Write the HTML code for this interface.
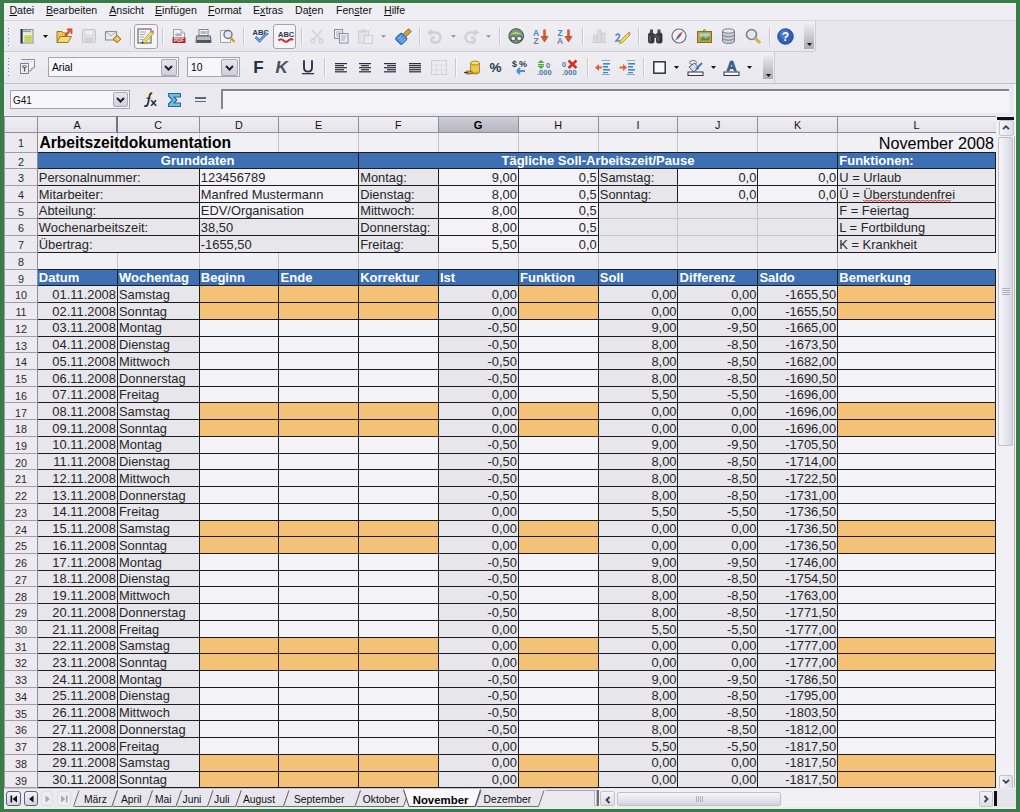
<!DOCTYPE html><html><head><meta charset="utf-8"><style>
*{box-sizing:border-box}
html,body{margin:0;padding:0}
body{width:1020px;height:812px;overflow:hidden;position:relative;background:#3a7b4a;font-family:"Liberation Sans",sans-serif;color:#000}
div{position:absolute}
.t{white-space:nowrap;line-height:1}
.c{font-size:12.9px;color:#262626;white-space:nowrap;line-height:1}
.r{text-align:right}
.h{font-weight:bold;color:#fff;font-size:13px;white-space:nowrap;line-height:1}
svg{position:absolute;overflow:visible}
</style></head><body>
<div style="left:4.00px;top:3.00px;width:1012.00px;height:806.00px;background:#e8e7ee"></div>
<div style="left:4.00px;top:3.00px;width:1012.00px;height:17.00px;background:#efeef3"></div>
<div style="left:4.00px;top:3.00px;width:1012.00px;height:1.00px;background:#eaf6ec"></div>
<div style="left:4.00px;top:20.00px;width:1012.00px;height:1.00px;background:#d6d5dc"></div>
<div class="t" style="left:9.40px;top:5.20px;font-size:10.6px;color:#111;text-decoration-thickness:1px;text-underline-offset:1px"><u>D</u>atei</div>
<div class="t" style="left:46.00px;top:5.20px;font-size:10.6px;color:#111;text-decoration-thickness:1px;text-underline-offset:1px"><u>B</u>earbeiten</div>
<div class="t" style="left:109.20px;top:5.20px;font-size:10.6px;color:#111;text-decoration-thickness:1px;text-underline-offset:1px"><u>A</u>nsicht</div>
<div class="t" style="left:155.00px;top:5.20px;font-size:10.6px;color:#111;text-decoration-thickness:1px;text-underline-offset:1px"><u>E</u>infügen</div>
<div class="t" style="left:208.00px;top:5.20px;font-size:10.6px;color:#111;text-decoration-thickness:1px;text-underline-offset:1px"><u>F</u>ormat</div>
<div class="t" style="left:253.00px;top:5.20px;font-size:10.6px;color:#111;text-decoration-thickness:1px;text-underline-offset:1px">E<u>x</u>tras</div>
<div class="t" style="left:295.00px;top:5.20px;font-size:10.6px;color:#111;text-decoration-thickness:1px;text-underline-offset:1px">Da<u>t</u>en</div>
<div class="t" style="left:336.00px;top:5.20px;font-size:10.6px;color:#111;text-decoration-thickness:1px;text-underline-offset:1px">Fen<u>s</u>ter</div>
<div class="t" style="left:384.00px;top:5.20px;font-size:10.6px;color:#111;text-decoration-thickness:1px;text-underline-offset:1px"><u>H</u>ilfe</div>
<div style="left:4.00px;top:21.00px;width:811.00px;height:30.00px;background:linear-gradient(#efeef3,#e9e8ee)"></div>
<div style="left:4.00px;top:51.00px;width:811.00px;height:1.00px;background:#cfced6"></div>
<div style="left:4.00px;top:52.00px;width:770.00px;height:31.00px;background:linear-gradient(#efeef3,#e9e8ee)"></div>
<div style="left:4.00px;top:82.50px;width:1012.00px;height:1.00px;background:#c4c3cb"></div>
<div style="left:4.00px;top:83.50px;width:1012.00px;height:32.50px;background:#eae9f0"></div>
<div style="left:815.00px;top:21.00px;width:1.00px;height:30.00px;background:#cfcdd4"></div>
<div style="left:774.00px;top:52.00px;width:1.00px;height:31.00px;background:#cfcdd4"></div>
<div style="left:8.20px;top:27.50px;width:1.20px;height:1.20px;background:#8a8a94"></div>
<div style="left:8.20px;top:30.90px;width:1.20px;height:1.20px;background:#8a8a94"></div>
<div style="left:8.20px;top:34.30px;width:1.20px;height:1.20px;background:#8a8a94"></div>
<div style="left:8.20px;top:37.70px;width:1.20px;height:1.20px;background:#8a8a94"></div>
<div style="left:8.20px;top:41.10px;width:1.20px;height:1.20px;background:#8a8a94"></div>
<div style="left:8.20px;top:44.50px;width:1.20px;height:1.20px;background:#8a8a94"></div>
<div style="left:8.20px;top:57.50px;width:1.20px;height:1.20px;background:#8a8a94"></div>
<div style="left:8.20px;top:60.90px;width:1.20px;height:1.20px;background:#8a8a94"></div>
<div style="left:8.20px;top:64.30px;width:1.20px;height:1.20px;background:#8a8a94"></div>
<div style="left:8.20px;top:67.70px;width:1.20px;height:1.20px;background:#8a8a94"></div>
<div style="left:8.20px;top:71.10px;width:1.20px;height:1.20px;background:#8a8a94"></div>
<div style="left:8.20px;top:74.50px;width:1.20px;height:1.20px;background:#8a8a94"></div>
<svg style="left:19px;top:28px" width="16" height="16" viewBox="0 0 16 16"><rect x="3" y="1.5" width="11" height="13.5" fill="#e8eed0" stroke="#8a8f88"/><rect x="5" y="7" width="8" height="7" fill="#d8e27a"/><path d="M5 9.5H13M5 12H13M8 7V14M10.5 7V14" stroke="#b5bf5a" stroke-width=".7"/><path d="M4 3 L12 3.5" stroke="#7aa0c0" stroke-width="1.3"/><rect x="1.5" y="1" width="2" height="14.5" fill="#1f2d55"/></svg>
<svg style="left:42.5px;top:34.5px" width="5" height="3" viewBox="0 0 5 3"><path d="M0 0H5L2.5 3Z" fill="#111"/></svg>
<svg style="left:56px;top:28px" width="17" height="16" viewBox="0 0 17 16"><path d="M1 3.5H6L7.5 5H11V14.5H1Z" fill="#f0c850" stroke="#9a7a20"/><path d="M1 14.5L4 8.5H15.5L12 14.5Z" fill="#f8dc70" stroke="#9a7a20"/><path d="M9 8 L14 2.5" stroke="#d05030" stroke-width="2.2"/><path d="M11 1.5H15.5V6" fill="none" stroke="#d05030" stroke-width="1.8"/></svg>
<svg style="left:81px;top:28px" width="16" height="16" viewBox="0 0 16 16"><rect x="1.5" y="1.5" width="13" height="13" rx="1" fill="#e2e2e6" stroke="#c4c4c8"/><rect x="4" y="2" width="8" height="5" fill="#f0f0f2" stroke="#cfcfd3" stroke-width=".7"/><rect x="4" y="9.5" width="8" height="5" fill="#d2d2d6"/></svg>
<svg style="left:104px;top:28px" width="18" height="17" viewBox="0 0 18 17"><rect x="1.5" y="3.5" width="11" height="8.5" fill="#e8eaf0" stroke="#8c9098" stroke-width="1.1"/><path d="M1.5 3.5L7 8L12.5 3.5" fill="none" stroke="#a8acb4" stroke-width="1"/><path d="M13 7L17 11L13 15L9 11Z" fill="#d8b040" stroke="#8a6a18" stroke-width=".8"/><path d="M11 11H14.5M13 9.5L14.8 11L13 12.5" fill="none" stroke="#f8e8a0" stroke-width=".9"/></svg>
<div style="left:129.50px;top:28.00px;width:1.00px;height:17.00px;background:#c9c7cf"></div>
<div style="left:130.50px;top:28.00px;width:1.00px;height:17.00px;background:#f8f8fa"></div>
<div style="left:134.30px;top:24.40px;width:23.70px;height:24.20px;border:1.5px solid #a4a3ac;border-radius:3px;background:#f5f5f8"></div>
<svg style="left:137px;top:28px" width="18" height="16" viewBox="0 0 18 16"><rect x="1" y="1" width="13" height="14" fill="#f4f4f8" stroke="#74747c" stroke-width="1.3"/><path d="M3 4H9M3 6.5H8M3 9H7M3 11.5H6" stroke="#9aa2b0" stroke-width=".9"/><path d="M5.5 13L14 3.5L16.5 5.5L8 15L5 15.5Z" fill="#e8e060" stroke="#8a8030" stroke-width=".6"/><path d="M14 3.5L16.5 5.5L17.2 3.6L15.6 2.2Z" fill="#c08090"/><circle cx="5.6" cy="14.6" r=".9" fill="#202028"/></svg>
<div style="left:162.00px;top:28.00px;width:1.00px;height:17.00px;background:#c9c7cf"></div>
<div style="left:163.00px;top:28.00px;width:1.00px;height:17.00px;background:#f8f8fa"></div>
<svg style="left:171px;top:28px" width="16" height="16" viewBox="0 0 16 16"><path d="M2.5 1.5H10L13.5 5V14.5H2.5Z" fill="#f2f2f4" stroke="#9a9ea6"/><path d="M10 1.5V5H13.5" fill="#dde" stroke="#9a9ea6" stroke-width=".8"/><rect x="4.5" y="5.5" width="6" height="2.5" fill="#8890a0" opacity=".7"/><rect x="1.5" y="9.5" width="13" height="5.5" fill="#a82830"/><text x="8" y="14.2" text-anchor="middle" font-size="5" font-weight="bold" font-family="Liberation Sans" fill="#f8e0e0">PDF</text></svg>
<svg style="left:195px;top:28px" width="17" height="16" viewBox="0 0 17 16"><rect x="4" y="1.5" width="9" height="6" fill="#f6f6f8" stroke="#80848c"/><rect x="5.5" y="3" width="6" height="3" fill="#a8b8d0"/><path d="M1.5 8H15.5L16 14.5H1Z" fill="#b8bcc2" stroke="#60646c"/><rect x="1.5" y="12" width="14.5" height="2.5" fill="#50545c"/></svg>
<svg style="left:219px;top:28px" width="17" height="16" viewBox="0 0 17 16"><path d="M1.5 2.5H9L11.5 5V14.5H1.5Z" fill="#f6f6f8" stroke="#a0a4aa"/><circle cx="9" cy="6.5" r="4" fill="#dde8f4" stroke="#70767e" stroke-width="1.4"/><path d="M11.5 9.5L15.5 14" stroke="#c8a030" stroke-width="2.4"/></svg>
<div style="left:243.30px;top:28.00px;width:1.00px;height:17.00px;background:#c9c7cf"></div>
<div style="left:244.30px;top:28.00px;width:1.00px;height:17.00px;background:#f8f8fa"></div>
<svg style="left:251.5px;top:27px" width="17" height="17" viewBox="0 0 17 17"><text x="0.5" y="7.5" font-size="7.5" font-weight="bold" font-family="Liberation Sans" fill="#2a3550">ABC</text><path d="M3.5 10L7.5 14L15 6" fill="none" stroke="#3a78b8" stroke-width="2.6"/><path d="M3.5 10L7.5 14L15 6" fill="none" stroke="#8cc4e8" stroke-width="1"/></svg>
<div style="left:273.40px;top:24.20px;width:22.60px;height:24.80px;border:1.5px solid #a4a3ac;border-radius:3px;background:#f5f5f8"></div>
<svg style="left:276.5px;top:28px" width="17" height="17" viewBox="0 0 17 17"><text x="1" y="9" font-size="7.5" font-weight="bold" font-family="Liberation Sans" fill="#2a3550">ABC</text><path d="M1.5 12.5Q4 10 6.5 12.5T11.5 12.5T16 12" fill="none" stroke="#c83030" stroke-width="2"/></svg>
<div style="left:300.50px;top:28.00px;width:1.00px;height:17.00px;background:#c9c7cf"></div>
<div style="left:301.50px;top:28.00px;width:1.00px;height:17.00px;background:#f8f8fa"></div>
<svg style="left:308.5px;top:28px" width="16" height="16" viewBox="0 0 16 16"><path d="M3 2L12 12M13 2L4 12" stroke="#d4d4d8" stroke-width="1.8"/><circle cx="4" cy="13" r="2" fill="none" stroke="#d4d4d8" stroke-width="1.3"/><circle cx="12" cy="13" r="2" fill="none" stroke="#d4d4d8" stroke-width="1.3"/></svg>
<svg style="left:333px;top:28px" width="17" height="16" viewBox="0 0 17 16"><rect x="1.5" y="1.5" width="8" height="9" fill="#eef0f4" stroke="#8890a0"/><path d="M3 4H8M3 6H8M3 8H7" stroke="#8890a0" stroke-width=".7"/><rect x="6.5" y="5.5" width="8.5" height="9.5" fill="#eef0f4" stroke="#8890a0"/><path d="M8 8H13M8 10H13M8 12H12" stroke="#8890a0" stroke-width=".7"/></svg>
<svg style="left:356.5px;top:28px" width="17" height="16" viewBox="0 0 17 16"><rect x="1.5" y="3" width="10" height="12" fill="#e4e4e8" stroke="#cdcdd2"/><rect x="4" y="1.5" width="5" height="3" fill="#d4d4d8"/><rect x="7.5" y="7.5" width="8" height="8" fill="#ececf0" stroke="#cdcdd2"/></svg>
<svg style="left:381px;top:34.5px" width="5" height="3" viewBox="0 0 5 3"><path d="M0 0H5L2.5 3Z" fill="#9c9ca4"/></svg>
<svg style="left:394.5px;top:27.5px" width="18" height="17" viewBox="0 0 18 17"><g transform="rotate(45 8 9)"><rect x="3.5" y="7" width="9" height="9" rx="2" fill="#4a8ed8" stroke="#23508a" stroke-width=".9"/><path d="M6 9V14M8.5 9V14M11 9V14" stroke="#b8dcf8" stroke-width=".8"/><rect x="6" y="-1" width="4" height="8" rx="1" fill="#c8a040" stroke="#7a5a18" stroke-width=".7"/></g></svg>
<div style="left:419.00px;top:28.00px;width:1.00px;height:17.00px;background:#c9c7cf"></div>
<div style="left:420.00px;top:28.00px;width:1.00px;height:17.00px;background:#f8f8fa"></div>
<svg style="left:425.5px;top:28.5px" width="18" height="16" viewBox="0 0 18 16"><path d="M4 3.5H9.5A5 5 0 0 1 9.5 13.5H8A2.5 2.5 0 0 1 8 8.5H9" fill="none" stroke="#cfcfd5" stroke-width="2.4"/><path d="M1 3.5L5.5 0V7Z" fill="#cfcfd5"/></svg>
<svg style="left:450.5px;top:34.5px" width="5" height="3" viewBox="0 0 5 3"><path d="M0 0H5L2.5 3Z" fill="#9c9ca4"/></svg>
<svg style="left:462.5px;top:28.5px" width="18" height="16" viewBox="0 0 18 16"><path d="M13 3.5H7.5A5 5 0 0 0 7.5 13.5H9A2.5 2.5 0 0 0 9 8.5H8" fill="none" stroke="#cfcfd5" stroke-width="2.4"/><path d="M16 3.5L11.5 0V7Z" fill="#cfcfd5"/></svg>
<svg style="left:486px;top:34.5px" width="5" height="3" viewBox="0 0 5 3"><path d="M0 0H5L2.5 3Z" fill="#9c9ca4"/></svg>
<div style="left:499.00px;top:28.00px;width:1.00px;height:17.00px;background:#c9c7cf"></div>
<div style="left:500.00px;top:28.00px;width:1.00px;height:17.00px;background:#f8f8fa"></div>
<svg style="left:507.5px;top:28px" width="17" height="16" viewBox="0 0 17 16"><circle cx="8.2" cy="8" r="7.3" fill="#7a9a78" stroke="#3e5246"/><path d="M2.5 6.5Q8 1.5 14 6.5Q8 5 2.5 6.5Z" fill="#b8e070"/><circle cx="5.2" cy="10.5" r="2.4" fill="#e6ece8" stroke="#3e4048" stroke-width=".9"/><circle cx="11.2" cy="10.5" r="2.4" fill="#e6ece8" stroke="#3e4048" stroke-width=".9"/></svg>
<svg style="left:532.5px;top:28px" width="17" height="16" viewBox="0 0 17 16"><text x="0" y="7.5" font-size="8.5" font-weight="bold" font-family="Liberation Sans" fill="#3a88c8">A</text><text x="0.5" y="15.5" font-size="8.5" font-weight="bold" font-family="Liberation Sans" fill="#787e88">Z</text><path d="M11.5 1.5V10" stroke="#d85a30" stroke-width="2.6"/><path d="M8 8.5H15L11.5 14Z" fill="#d85a30" stroke="#a83818" stroke-width=".6"/></svg>
<svg style="left:557px;top:28px" width="17" height="16" viewBox="0 0 17 16"><text x="0.5" y="7.5" font-size="8.5" font-weight="bold" font-family="Liberation Sans" fill="#3a88c8">Z</text><text x="0" y="15.5" font-size="8.5" font-weight="bold" font-family="Liberation Sans" fill="#787e88">A</text><path d="M11.5 1.5V10" stroke="#d85a30" stroke-width="2.6"/><path d="M8 8.5H15L11.5 14Z" fill="#d85a30" stroke="#a83818" stroke-width=".6"/></svg>
<div style="left:581.50px;top:28.00px;width:1.00px;height:17.00px;background:#c9c7cf"></div>
<div style="left:582.50px;top:28.00px;width:1.00px;height:17.00px;background:#f8f8fa"></div>
<svg style="left:591.5px;top:28px" width="15" height="16" viewBox="0 0 15 16"><rect x="1.5" y="7" width="3.5" height="7.5" fill="#dcdce0" stroke="#cacace" stroke-width=".7"/><rect x="5.5" y="2" width="3.5" height="12.5" fill="#dcdce0" stroke="#cacace" stroke-width=".7"/><rect x="9.5" y="5" width="3.5" height="9.5" fill="#dcdce0" stroke="#cacace" stroke-width=".7"/><path d="M0.5 14.5H14" stroke="#cacace"/></svg>
<svg style="left:613.5px;top:28px" width="17" height="16" viewBox="0 0 17 16"><path d="M1.5 7.5Q4 5 5.5 7Q6 9 2 13H7" fill="none" stroke="#5a88c8" stroke-width="1.6"/><path d="M6 13L14 5L16 7L8 15L5.5 15.5Z" fill="#f0d850" stroke="#a08020" stroke-width=".7"/><path d="M14 5L16 7L16.5 5L15 3.5Z" fill="#e07878"/></svg>
<div style="left:638.30px;top:28.00px;width:1.00px;height:17.00px;background:#c9c7cf"></div>
<div style="left:639.30px;top:28.00px;width:1.00px;height:17.00px;background:#f8f8fa"></div>
<svg style="left:646.5px;top:28px" width="17" height="16" viewBox="0 0 17 16"><rect x="1.5" y="5" width="5.5" height="10" rx="1.5" fill="#3a3a40" stroke="#1a1a1e" stroke-width=".7"/><rect x="9.5" y="5" width="5.5" height="10" rx="1.5" fill="#3a3a40" stroke="#1a1a1e" stroke-width=".7"/><rect x="3" y="1.5" width="3" height="4" fill="#4a4a50"/><rect x="10.5" y="1.5" width="3" height="4" fill="#4a4a50"/><rect x="6.5" y="6" width="3.5" height="4" fill="#505058"/><path d="M3 8V13M11 8V13" stroke="#8a8a94" stroke-width=".8"/></svg>
<svg style="left:670.5px;top:28px" width="16" height="16" viewBox="0 0 16 16"><circle cx="8" cy="8" r="7" fill="#f0f2f6" stroke="#6a6e78" stroke-width="1.2"/><path d="M12 3L9 9L7 7Z" fill="#d03030"/><path d="M4 13L7 7L9 9Z" fill="#3a6ab8"/></svg>
<svg style="left:695.5px;top:28px" width="17" height="16" viewBox="0 0 17 16"><rect x="1.5" y="3.5" width="14" height="11" fill="#c8a040" stroke="#8a6a20"/><rect x="3.5" y="5.5" width="10" height="7" fill="#98c070"/><path d="M3.5 12.5L7 8.5L10 11L13.5 8V12.5Z" fill="#5a8a40"/><rect x="3.5" y="5.5" width="10" height="2.5" fill="#a8d0e8"/><path d="M7 3.5L8.5 1L10 3.5" fill="none" stroke="#8a6a20" stroke-width=".8"/></svg>
<svg style="left:720.5px;top:28px" width="15" height="16" viewBox="0 0 15 16"><path d="M1.5 3V13A6 2.5 0 0 0 13.5 13V3" fill="#c8ccd4" stroke="#7a7e88"/><ellipse cx="7.5" cy="3" rx="6" ry="2.2" fill="#e8eaf0" stroke="#7a7e88"/><path d="M1.5 6.5A6 2.2 0 0 0 13.5 6.5M1.5 10A6 2.2 0 0 0 13.5 10" fill="none" stroke="#7a7e88"/></svg>
<svg style="left:744.5px;top:28px" width="17" height="16" viewBox="0 0 17 16"><circle cx="6.5" cy="6.5" r="5" fill="#dde8f4" stroke="#7a8088" stroke-width="1.6"/><path d="M10 10L15 15" stroke="#c8a030" stroke-width="2.8"/><path d="M10 10L15 15" stroke="#e8d070" stroke-width="1"/></svg>
<div style="left:769.00px;top:28.00px;width:1.00px;height:17.00px;background:#c9c7cf"></div>
<div style="left:770.00px;top:28.00px;width:1.00px;height:17.00px;background:#f8f8fa"></div>
<svg style="left:777px;top:27.5px" width="17" height="17" viewBox="0 0 17 17"><circle cx="8.5" cy="8.5" r="7.8" fill="#2e5fb0" stroke="#1c3e80" stroke-width=".8"/><circle cx="7.5" cy="6.5" r="5" fill="#5a88d0" opacity=".6"/><text x="8.5" y="13.2" text-anchor="middle" font-size="12" font-weight="bold" font-family="Liberation Sans" fill="#fff">?</text></svg>
<div style="left:804.00px;top:24.00px;width:10.00px;height:24.50px;background:linear-gradient(#ecebf0,#bdbcc4 70%,#aeadb5)"></div>
<svg style="left:806.5px;top:42.5px" width="5" height="3" viewBox="0 0 5 3"><path d="M0 0H5L2.5 3Z" fill="#111"/></svg>
<svg style="left:19px;top:58px" width="17" height="17" viewBox="0 0 17 17"><path d="M2.5 1.5H15.5V9L11.5 13H8" fill="#f2f2f8" stroke="#8c8c94" stroke-width="1"/><path d="M15.5 9Q12 9 11.5 13" fill="#d8d8de" stroke="#8c8c94" stroke-width=".8"/><path d="M4.5 3.8H13" stroke="#d8dcea" stroke-width="1"/><rect x="1.5" y="5.5" width="8" height="10" fill="#f0f0f6" stroke="#808088" stroke-width="1"/><ellipse cx="5.5" cy="8.6" rx="2.4" ry="1.6" fill="#6a6a74"/><ellipse cx="5.5" cy="8.3" rx="1.2" ry=".6" fill="#f4f4f8"/><rect x="4.8" y="9.5" width="1.5" height="4" fill="#5a5a64"/></svg>
<div style="left:48.30px;top:57.30px;width:130.70px;height:20.10px;background:#f7f7fa;border:1px solid #a6a5ae"></div>
<div class="t" style="left:52.00px;top:62.60px;font-size:10.3px;color:#000">Arial</div>
<div style="left:160.50px;top:58.50px;width:16.70px;height:17.70px;background:linear-gradient(#e6e6ee,#d0d0da);border:1px solid #a8a8b6;border-radius:2px"></div>
<svg style="left:164.3px;top:64.5px" width="9" height="6" viewBox="0 0 9 6"><path d="M1 1L4.5 4.5L8 1" fill="none" stroke="#1e2230" stroke-width="2"/></svg>
<div style="left:187.00px;top:57.30px;width:52.50px;height:20.10px;background:#f7f7fa;border:1px solid #a6a5ae"></div>
<div class="t" style="left:191.00px;top:62.60px;font-size:10.3px;color:#000">10</div>
<div style="left:220.60px;top:58.50px;width:17.10px;height:17.70px;background:linear-gradient(#e6e6ee,#d0d0da);border:1px solid #a8a8b6;border-radius:2px"></div>
<svg style="left:224.7px;top:64.5px" width="9" height="6" viewBox="0 0 9 6"><path d="M1 1L4.5 4.5L8 1" fill="none" stroke="#1e2230" stroke-width="2"/></svg>
<div class="t" style="left:253.30px;top:59.20px;font-size:17px;font-weight:bold;color:#22303e">F</div>
<div class="t" style="left:275.50px;top:59.20px;font-size:17px;font-weight:bold;font-style:italic;color:#46505e">K</div>
<svg style="left:302px;top:59px" width="13" height="16" viewBox="0 0 13 16"><path d="M2 1.2V8.5Q2 12.6 6 12.6Q10 12.6 10 8.5V1.2" fill="none" stroke="#2e3646" stroke-width="1.9"/><rect x="0" y="14" width="12" height="1.3" fill="#2e3646"/></svg>
<div style="left:324.00px;top:58.00px;width:1.00px;height:19.00px;background:#c9c7cf"></div>
<div style="left:325.00px;top:58.00px;width:1.00px;height:19.00px;background:#f8f8fa"></div>
<svg style="left:334.5px;top:62.9px" width="13" height="10" viewBox="0 0 13 10"><rect x="0" y="0.00" width="12" height="1.2" fill="#2a303c"/><rect x="0" y="2.05" width="9" height="1.2" fill="#2a303c"/><rect x="0" y="4.10" width="12" height="1.2" fill="#2a303c"/><rect x="0" y="6.15" width="9" height="1.2" fill="#2a303c"/><rect x="0" y="8.20" width="12" height="1.2" fill="#2a303c"/></svg>
<svg style="left:359.3px;top:62.9px" width="13" height="10" viewBox="0 0 13 10"><rect x="0.0" y="0.00" width="12" height="1.2" fill="#2a303c"/><rect x="2.0" y="2.05" width="8" height="1.2" fill="#2a303c"/><rect x="0.0" y="4.10" width="12" height="1.2" fill="#2a303c"/><rect x="2.0" y="6.15" width="8" height="1.2" fill="#2a303c"/><rect x="0.0" y="8.20" width="12" height="1.2" fill="#2a303c"/></svg>
<svg style="left:384.0px;top:62.9px" width="13" height="10" viewBox="0 0 13 10"><rect x="0" y="0.00" width="12" height="1.2" fill="#2a303c"/><rect x="3" y="2.05" width="9" height="1.2" fill="#2a303c"/><rect x="0" y="4.10" width="12" height="1.2" fill="#2a303c"/><rect x="3" y="6.15" width="9" height="1.2" fill="#2a303c"/><rect x="0" y="8.20" width="12" height="1.2" fill="#2a303c"/></svg>
<svg style="left:408.5px;top:62.9px" width="13" height="10" viewBox="0 0 13 10"><rect x="0" y="0.00" width="12" height="1.2" fill="#2a303c"/><rect x="0" y="2.05" width="12" height="1.2" fill="#2a303c"/><rect x="0" y="4.10" width="12" height="1.2" fill="#2a303c"/><rect x="0" y="6.15" width="12" height="1.2" fill="#2a303c"/><rect x="0" y="8.20" width="12" height="1.2" fill="#2a303c"/></svg>
<svg style="left:431px;top:60px" width="16" height="15" viewBox="0 0 16 15"><rect x="0.5" y="0.5" width="15" height="14" fill="#ececf0" stroke="#cfcfd4"/><path d="M0.5 5H15.5M0.5 10H15.5M5.5 5V14.5M10.5 5V14.5" stroke="#d6d6da" stroke-width=".8"/></svg>
<div style="left:455.00px;top:58.00px;width:1.00px;height:19.00px;background:#c9c7cf"></div>
<div style="left:456.00px;top:58.00px;width:1.00px;height:19.00px;background:#f8f8fa"></div>
<svg style="left:463.5px;top:59px" width="17" height="16" viewBox="0 0 17 16"><ellipse cx="11" cy="13" rx="4.5" ry="2" fill="#d8b030" stroke="#8a6a10" stroke-width=".7"/><rect x="6.5" y="4" width="9" height="9" fill="#e8c848"/><ellipse cx="11" cy="4" rx="4.5" ry="2" fill="#f8e070" stroke="#8a6a10" stroke-width=".7"/><path d="M6.5 4V13M15.5 4V13" stroke="#8a6a10" stroke-width=".7"/><ellipse cx="5" cy="13.5" rx="4" ry="1.6" fill="#c8a028" stroke="#6a5010" stroke-width=".7"/><path d="M0 13.5H4" stroke="#404040" stroke-width="1"/></svg>
<div class="t" style="left:489.50px;top:60.50px;font-size:13.5px;font-weight:bold;color:#2a3a4e">%</div>
<svg style="left:512px;top:59px" width="18" height="16" viewBox="0 0 18 16"><text x="0" y="8" font-size="9" font-weight="bold" font-family="Liberation Sans" fill="#2a3a4e">$</text><text x="7" y="8" font-size="9" font-weight="bold" font-family="Liberation Sans" fill="#2a3a4e">%</text><path d="M5 12H13M5 12L8 9M5 12L8 15" stroke="#4a90d0" stroke-width="2" fill="none"/></svg>
<svg style="left:537px;top:59px" width="17" height="16" viewBox="0 0 17 16"><path d="M4 1L7.5 4H0.5Z" fill="#50b040"/><rect x="1" y="5" width="6" height="1.5" fill="#50b040"/><path d="M4 10L7.5 7H0.5Z" fill="#50b040"/><text x="9" y="9" font-size="7.5" font-weight="bold" font-family="Liberation Sans" fill="#4a78a8">0</text><text x="0" y="15.5" font-size="7.5" font-weight="bold" font-family="Liberation Sans" fill="#4a78a8">.000</text></svg>
<svg style="left:561.5px;top:59px" width="17" height="16" viewBox="0 0 17 16"><text x="0" y="8" font-size="7.5" font-weight="bold" font-family="Liberation Sans" fill="#4a78a8">0</text><path d="M6.5 1.5L14.5 9M14.5 1.5L6.5 9" stroke="#d82828" stroke-width="2.4"/><text x="0" y="15.5" font-size="7.5" font-weight="bold" font-family="Liberation Sans" fill="#4a78a8">.000</text></svg>
<div style="left:586.50px;top:58.00px;width:1.00px;height:19.00px;background:#c9c7cf"></div>
<div style="left:587.50px;top:58.00px;width:1.00px;height:19.00px;background:#f8f8fa"></div>
<svg style="left:594.4px;top:60px" width="17" height="15" viewBox="0 0 17 15"><path d="M7.5 0.5H16M7.5 14.5H16" stroke="#8090a0" stroke-width=".8"/><rect x="9" y="3" width="7" height="1.6" fill="#3a8ac8"/><rect x="9" y="6" width="5" height="1.6" fill="#3a8ac8"/><rect x="9" y="9" width="7" height="1.6" fill="#3a8ac8"/><rect x="9" y="12" width="5" height="1.2" fill="#3a8ac8"/><path d="M1 7.5L5 4V11Z" fill="#e06030"/><rect x="4" y="6.5" width="4" height="2" fill="#e06030"/></svg>
<svg style="left:618.6px;top:60px" width="17" height="15" viewBox="0 0 17 15"><path d="M7.5 0.5H16M7.5 14.5H16" stroke="#8090a0" stroke-width=".8"/><rect x="9" y="3" width="7" height="1.6" fill="#3a8ac8"/><rect x="9" y="6" width="5" height="1.6" fill="#3a8ac8"/><rect x="9" y="9" width="7" height="1.6" fill="#3a8ac8"/><rect x="9" y="12" width="5" height="1.2" fill="#3a8ac8"/><path d="M8 7.5L4 4V11Z" fill="#e06030"/><rect x="0.5" y="6.5" width="4" height="2" fill="#e06030"/></svg>
<div style="left:643.30px;top:58.00px;width:1.00px;height:19.00px;background:#c9c7cf"></div>
<div style="left:644.30px;top:58.00px;width:1.00px;height:19.00px;background:#f8f8fa"></div>
<svg style="left:652.5px;top:60.5px" width="13" height="13" viewBox="0 0 13 13"><rect x="0.8" y="0.8" width="11.4" height="11.4" fill="#f8f8fa" stroke="#303440" stroke-width="1.5"/></svg>
<svg style="left:674px;top:65.5px" width="5" height="3" viewBox="0 0 5 3"><path d="M0 0H5L2.5 3Z" fill="#111"/></svg>
<svg style="left:686.5px;top:58.5px" width="17" height="17" viewBox="0 0 17 17"><ellipse cx="6" cy="3.5" rx="3.5" ry="2" fill="#f0f0f4" stroke="#60646c" stroke-width=".9"/><path d="M2 8L7.5 4L12 9L6.5 13Z" fill="#d8dce4" stroke="#50545c" stroke-width=".9"/><path d="M9 10L15 4" stroke="#3a78c8" stroke-width="2"/><rect x="1" y="13" width="15" height="3.5" fill="#f8f8fa" stroke="#303440" stroke-width="1"/></svg>
<svg style="left:710.8px;top:65.5px" width="5" height="3" viewBox="0 0 5 3"><path d="M0 0H5L2.5 3Z" fill="#111"/></svg>
<svg style="left:723px;top:58.5px" width="17" height="17" viewBox="0 0 17 17"><text x="8.5" y="12" text-anchor="middle" font-size="14" font-weight="bold" font-family="Liberation Sans" fill="#3a70a8" stroke="#1a3a60" stroke-width=".6">A</text><rect x="1" y="13" width="15" height="3.5" fill="#f8f8fa" stroke="#303440" stroke-width="1"/></svg>
<svg style="left:747px;top:65.5px" width="5" height="3" viewBox="0 0 5 3"><path d="M0 0H5L2.5 3Z" fill="#111"/></svg>
<div style="left:763.00px;top:55.40px;width:10.00px;height:24.10px;background:linear-gradient(#ecebf0,#bdbcc4 70%,#aeadb5)"></div>
<svg style="left:765.5px;top:73.5px" width="5" height="3" viewBox="0 0 5 3"><path d="M0 0H5L2.5 3Z" fill="#111"/></svg>
<div style="left:10.30px;top:89.50px;width:120.10px;height:19.90px;background:#f7f7fa;border:1px solid #a4a3ac"></div>
<div class="t" style="left:13.00px;top:96.20px;font-size:10px;color:#111">G41</div>
<div style="left:112.50px;top:92.30px;width:15.80px;height:15.10px;background:linear-gradient(#e6e6ee,#d0d0da);border:1px solid #a8a8b6;border-radius:2px"></div>
<svg style="left:115.9px;top:97px" width="9" height="6" viewBox="0 0 9 6"><path d="M1 1L4.5 4.5L8 1" fill="none" stroke="#1e2230" stroke-width="2"/></svg>
<svg style="left:140px;top:90px" width="20" height="19" viewBox="0 0 20 19"><ellipse cx="9" cy="5" rx="5" ry="4" fill="#f4eca0" opacity=".45"/><path d="M12.2 3.2Q10 3 9.5 6L8 13.5Q7.5 16.5 4.2 16.2" fill="none" stroke="#2a3048" stroke-width="1.7"/><path d="M6.5 8.2H10.5" stroke="#2a3048" stroke-width="1.2"/><path d="M11.2 10.2L16.2 15.8M16 10.2L11.2 15.8" stroke="#2a3048" stroke-width="1.6"/></svg>
<svg style="left:167px;top:92px" width="16" height="16" viewBox="0 0 16 16"><path d="M1.5 1.5H13.5V5H6.8L10 8L6.8 11H13.5V14.5H1.5V12L5.5 8L1.5 4Z" fill="#6cc0e8" stroke="#286a8c" stroke-width="1.1" stroke-linejoin="round"/></svg>
<div style="left:195.00px;top:97.30px;width:11.00px;height:1.70px;background:#5a6880"></div>
<div style="left:195.00px;top:100.80px;width:11.00px;height:1.70px;background:#5a6880"></div>
<div style="left:221.00px;top:89.00px;width:788.00px;height:23.50px;background:#f5f4f8;border-top:2px solid #85848c"></div>
<div style="left:221.00px;top:89.00px;width:2.00px;height:19.50px;background:#85848c"></div>
<div style="left:1013.50px;top:84.00px;width:1.00px;height:31.00px;background:#f8f8fa"></div>
<div style="left:4.00px;top:116.00px;width:993.00px;height:671.70px;background:#f1f0f4"></div>
<div style="left:5.00px;top:116.00px;width:991.00px;height:16.00px;background:linear-gradient(#f0eff4,#e4e3e9)"></div>
<div style="left:438.20px;top:116.00px;width:80.00px;height:16.00px;background:linear-gradient(#d0d0d8,#b6b6c2)"></div>
<div style="left:5.00px;top:132.00px;width:32.00px;height:655.70px;background:#eceaf0"></div>
<div style="left:116.70px;top:132.00px;width:1.00px;height:655.70px;background:#c6c5cc"></div>
<div style="left:198.50px;top:132.00px;width:1.00px;height:655.70px;background:#c6c5cc"></div>
<div style="left:278.30px;top:132.00px;width:1.00px;height:655.70px;background:#c6c5cc"></div>
<div style="left:357.90px;top:132.00px;width:1.00px;height:655.70px;background:#c6c5cc"></div>
<div style="left:437.70px;top:132.00px;width:1.00px;height:655.70px;background:#c6c5cc"></div>
<div style="left:517.70px;top:132.00px;width:1.00px;height:655.70px;background:#c6c5cc"></div>
<div style="left:597.50px;top:132.00px;width:1.00px;height:655.70px;background:#c6c5cc"></div>
<div style="left:677.30px;top:132.00px;width:1.00px;height:655.70px;background:#c6c5cc"></div>
<div style="left:757.10px;top:132.00px;width:1.00px;height:655.70px;background:#c6c5cc"></div>
<div style="left:837.00px;top:132.00px;width:1.00px;height:655.70px;background:#c6c5cc"></div>
<div style="left:37.00px;top:151.50px;width:959.00px;height:1.00px;background:#c6c5cc"></div>
<div style="left:37.00px;top:168.23px;width:959.00px;height:1.00px;background:#c6c5cc"></div>
<div style="left:37.00px;top:184.96px;width:959.00px;height:1.00px;background:#c6c5cc"></div>
<div style="left:37.00px;top:201.69px;width:959.00px;height:1.00px;background:#c6c5cc"></div>
<div style="left:37.00px;top:218.42px;width:959.00px;height:1.00px;background:#c6c5cc"></div>
<div style="left:37.00px;top:235.15px;width:959.00px;height:1.00px;background:#c6c5cc"></div>
<div style="left:37.00px;top:251.88px;width:959.00px;height:1.00px;background:#c6c5cc"></div>
<div style="left:37.00px;top:268.61px;width:959.00px;height:1.00px;background:#c6c5cc"></div>
<div style="left:37.00px;top:285.34px;width:959.00px;height:1.00px;background:#c6c5cc"></div>
<div style="left:37.00px;top:302.07px;width:959.00px;height:1.00px;background:#c6c5cc"></div>
<div style="left:37.00px;top:318.80px;width:959.00px;height:1.00px;background:#c6c5cc"></div>
<div style="left:37.00px;top:335.53px;width:959.00px;height:1.00px;background:#c6c5cc"></div>
<div style="left:37.00px;top:352.26px;width:959.00px;height:1.00px;background:#c6c5cc"></div>
<div style="left:37.00px;top:368.99px;width:959.00px;height:1.00px;background:#c6c5cc"></div>
<div style="left:37.00px;top:385.72px;width:959.00px;height:1.00px;background:#c6c5cc"></div>
<div style="left:37.00px;top:402.45px;width:959.00px;height:1.00px;background:#c6c5cc"></div>
<div style="left:37.00px;top:419.18px;width:959.00px;height:1.00px;background:#c6c5cc"></div>
<div style="left:37.00px;top:435.91px;width:959.00px;height:1.00px;background:#c6c5cc"></div>
<div style="left:37.00px;top:452.64px;width:959.00px;height:1.00px;background:#c6c5cc"></div>
<div style="left:37.00px;top:469.37px;width:959.00px;height:1.00px;background:#c6c5cc"></div>
<div style="left:37.00px;top:486.10px;width:959.00px;height:1.00px;background:#c6c5cc"></div>
<div style="left:37.00px;top:502.83px;width:959.00px;height:1.00px;background:#c6c5cc"></div>
<div style="left:37.00px;top:519.56px;width:959.00px;height:1.00px;background:#c6c5cc"></div>
<div style="left:37.00px;top:536.29px;width:959.00px;height:1.00px;background:#c6c5cc"></div>
<div style="left:37.00px;top:553.02px;width:959.00px;height:1.00px;background:#c6c5cc"></div>
<div style="left:37.00px;top:569.75px;width:959.00px;height:1.00px;background:#c6c5cc"></div>
<div style="left:37.00px;top:586.48px;width:959.00px;height:1.00px;background:#c6c5cc"></div>
<div style="left:37.00px;top:603.21px;width:959.00px;height:1.00px;background:#c6c5cc"></div>
<div style="left:37.00px;top:619.94px;width:959.00px;height:1.00px;background:#c6c5cc"></div>
<div style="left:37.00px;top:636.67px;width:959.00px;height:1.00px;background:#c6c5cc"></div>
<div style="left:37.00px;top:653.40px;width:959.00px;height:1.00px;background:#c6c5cc"></div>
<div style="left:37.00px;top:670.13px;width:959.00px;height:1.00px;background:#c6c5cc"></div>
<div style="left:37.00px;top:686.86px;width:959.00px;height:1.00px;background:#c6c5cc"></div>
<div style="left:37.00px;top:703.59px;width:959.00px;height:1.00px;background:#c6c5cc"></div>
<div style="left:37.00px;top:720.32px;width:959.00px;height:1.00px;background:#c6c5cc"></div>
<div style="left:37.00px;top:737.05px;width:959.00px;height:1.00px;background:#c6c5cc"></div>
<div style="left:37.00px;top:753.78px;width:959.00px;height:1.00px;background:#c6c5cc"></div>
<div style="left:37.00px;top:770.51px;width:959.00px;height:1.00px;background:#c6c5cc"></div>
<div style="left:37.00px;top:787.24px;width:959.00px;height:1.00px;background:#c6c5cc"></div>
<div style="left:37.00px;top:168.73px;width:162.00px;height:16.73px;background:#e7e6eb"></div>
<div style="left:199.00px;top:168.73px;width:159.40px;height:16.73px;background:#f3f2f6"></div>
<div style="left:358.40px;top:168.73px;width:79.80px;height:16.73px;background:#e7e6eb"></div>
<div style="left:438.20px;top:168.73px;width:159.80px;height:16.73px;background:#f3f2f6"></div>
<div style="left:598.00px;top:168.73px;width:79.80px;height:16.73px;background:#e7e6eb"></div>
<div style="left:677.80px;top:168.73px;width:159.70px;height:16.73px;background:#f3f2f6"></div>
<div style="left:837.50px;top:168.73px;width:158.10px;height:16.73px;background:#e7e6eb"></div>
<div style="left:37.00px;top:185.46px;width:162.00px;height:16.73px;background:#e7e6eb"></div>
<div style="left:199.00px;top:185.46px;width:159.40px;height:16.73px;background:#f3f2f6"></div>
<div style="left:358.40px;top:185.46px;width:79.80px;height:16.73px;background:#e7e6eb"></div>
<div style="left:438.20px;top:185.46px;width:159.80px;height:16.73px;background:#f3f2f6"></div>
<div style="left:598.00px;top:185.46px;width:79.80px;height:16.73px;background:#e7e6eb"></div>
<div style="left:677.80px;top:185.46px;width:159.70px;height:16.73px;background:#f3f2f6"></div>
<div style="left:837.50px;top:185.46px;width:158.10px;height:16.73px;background:#e7e6eb"></div>
<div style="left:37.00px;top:202.19px;width:162.00px;height:16.73px;background:#e7e6eb"></div>
<div style="left:199.00px;top:202.19px;width:159.40px;height:16.73px;background:#f3f2f6"></div>
<div style="left:358.40px;top:202.19px;width:79.80px;height:16.73px;background:#e7e6eb"></div>
<div style="left:438.20px;top:202.19px;width:159.80px;height:16.73px;background:#f3f2f6"></div>
<div style="left:598.00px;top:202.19px;width:239.50px;height:16.73px;background:#e7e6eb"></div>
<div style="left:837.50px;top:202.19px;width:158.10px;height:16.73px;background:#e7e6eb"></div>
<div style="left:37.00px;top:218.92px;width:162.00px;height:16.73px;background:#e7e6eb"></div>
<div style="left:199.00px;top:218.92px;width:159.40px;height:16.73px;background:#e7e6eb"></div>
<div style="left:358.40px;top:218.92px;width:79.80px;height:16.73px;background:#e7e6eb"></div>
<div style="left:438.20px;top:218.92px;width:159.80px;height:16.73px;background:#f3f2f6"></div>
<div style="left:598.00px;top:218.92px;width:239.50px;height:16.73px;background:#e7e6eb"></div>
<div style="left:837.50px;top:218.92px;width:158.10px;height:16.73px;background:#e7e6eb"></div>
<div style="left:37.00px;top:235.65px;width:162.00px;height:16.73px;background:#e7e6eb"></div>
<div style="left:199.00px;top:235.65px;width:159.40px;height:16.73px;background:#e7e6eb"></div>
<div style="left:358.40px;top:235.65px;width:79.80px;height:16.73px;background:#e7e6eb"></div>
<div style="left:438.20px;top:235.65px;width:159.80px;height:16.73px;background:#f3f2f6"></div>
<div style="left:598.00px;top:235.65px;width:239.50px;height:16.73px;background:#e7e6eb"></div>
<div style="left:837.50px;top:235.65px;width:158.10px;height:16.73px;background:#e7e6eb"></div>
<div style="left:37.00px;top:152.00px;width:958.60px;height:16.73px;background:#3d6fb3"></div>
<div style="left:37.00px;top:269.11px;width:958.60px;height:16.73px;background:#3d6fb3"></div>
<div style="left:37.00px;top:285.84px;width:162.00px;height:16.73px;background:#e7e6eb"></div>
<div style="left:199.00px;top:285.84px;width:239.20px;height:16.73px;background:#f3c276"></div>
<div style="left:438.20px;top:285.84px;width:80.00px;height:16.73px;background:#e7e6eb"></div>
<div style="left:518.20px;top:285.84px;width:79.80px;height:16.73px;background:#f3c276"></div>
<div style="left:598.00px;top:285.84px;width:239.50px;height:16.73px;background:#e7e6eb"></div>
<div style="left:837.50px;top:285.84px;width:158.10px;height:16.73px;background:#f3c276"></div>
<div style="left:37.00px;top:302.57px;width:162.00px;height:16.73px;background:#e7e6eb"></div>
<div style="left:199.00px;top:302.57px;width:239.20px;height:16.73px;background:#f3c276"></div>
<div style="left:438.20px;top:302.57px;width:80.00px;height:16.73px;background:#e7e6eb"></div>
<div style="left:518.20px;top:302.57px;width:79.80px;height:16.73px;background:#f3c276"></div>
<div style="left:598.00px;top:302.57px;width:239.50px;height:16.73px;background:#e7e6eb"></div>
<div style="left:837.50px;top:302.57px;width:158.10px;height:16.73px;background:#f3c276"></div>
<div style="left:37.00px;top:319.30px;width:162.00px;height:16.73px;background:#e7e6eb"></div>
<div style="left:199.00px;top:319.30px;width:239.20px;height:16.73px;background:#f3f2f6"></div>
<div style="left:438.20px;top:319.30px;width:80.00px;height:16.73px;background:#e7e6eb"></div>
<div style="left:518.20px;top:319.30px;width:79.80px;height:16.73px;background:#f3f2f6"></div>
<div style="left:598.00px;top:319.30px;width:239.50px;height:16.73px;background:#e7e6eb"></div>
<div style="left:837.50px;top:319.30px;width:158.10px;height:16.73px;background:#f3f2f6"></div>
<div style="left:37.00px;top:336.03px;width:162.00px;height:16.73px;background:#e7e6eb"></div>
<div style="left:199.00px;top:336.03px;width:239.20px;height:16.73px;background:#f3f2f6"></div>
<div style="left:438.20px;top:336.03px;width:80.00px;height:16.73px;background:#e7e6eb"></div>
<div style="left:518.20px;top:336.03px;width:79.80px;height:16.73px;background:#f3f2f6"></div>
<div style="left:598.00px;top:336.03px;width:239.50px;height:16.73px;background:#e7e6eb"></div>
<div style="left:837.50px;top:336.03px;width:158.10px;height:16.73px;background:#f3f2f6"></div>
<div style="left:37.00px;top:352.76px;width:162.00px;height:16.73px;background:#e7e6eb"></div>
<div style="left:199.00px;top:352.76px;width:239.20px;height:16.73px;background:#f3f2f6"></div>
<div style="left:438.20px;top:352.76px;width:80.00px;height:16.73px;background:#e7e6eb"></div>
<div style="left:518.20px;top:352.76px;width:79.80px;height:16.73px;background:#f3f2f6"></div>
<div style="left:598.00px;top:352.76px;width:239.50px;height:16.73px;background:#e7e6eb"></div>
<div style="left:837.50px;top:352.76px;width:158.10px;height:16.73px;background:#f3f2f6"></div>
<div style="left:37.00px;top:369.49px;width:162.00px;height:16.73px;background:#e7e6eb"></div>
<div style="left:199.00px;top:369.49px;width:239.20px;height:16.73px;background:#f3f2f6"></div>
<div style="left:438.20px;top:369.49px;width:80.00px;height:16.73px;background:#e7e6eb"></div>
<div style="left:518.20px;top:369.49px;width:79.80px;height:16.73px;background:#f3f2f6"></div>
<div style="left:598.00px;top:369.49px;width:239.50px;height:16.73px;background:#e7e6eb"></div>
<div style="left:837.50px;top:369.49px;width:158.10px;height:16.73px;background:#f3f2f6"></div>
<div style="left:37.00px;top:386.22px;width:162.00px;height:16.73px;background:#e7e6eb"></div>
<div style="left:199.00px;top:386.22px;width:239.20px;height:16.73px;background:#f3f2f6"></div>
<div style="left:438.20px;top:386.22px;width:80.00px;height:16.73px;background:#e7e6eb"></div>
<div style="left:518.20px;top:386.22px;width:79.80px;height:16.73px;background:#f3f2f6"></div>
<div style="left:598.00px;top:386.22px;width:239.50px;height:16.73px;background:#e7e6eb"></div>
<div style="left:837.50px;top:386.22px;width:158.10px;height:16.73px;background:#f3f2f6"></div>
<div style="left:37.00px;top:402.95px;width:162.00px;height:16.73px;background:#e7e6eb"></div>
<div style="left:199.00px;top:402.95px;width:239.20px;height:16.73px;background:#f3c276"></div>
<div style="left:438.20px;top:402.95px;width:80.00px;height:16.73px;background:#e7e6eb"></div>
<div style="left:518.20px;top:402.95px;width:79.80px;height:16.73px;background:#f3c276"></div>
<div style="left:598.00px;top:402.95px;width:239.50px;height:16.73px;background:#e7e6eb"></div>
<div style="left:837.50px;top:402.95px;width:158.10px;height:16.73px;background:#f3c276"></div>
<div style="left:37.00px;top:419.68px;width:162.00px;height:16.73px;background:#e7e6eb"></div>
<div style="left:199.00px;top:419.68px;width:239.20px;height:16.73px;background:#f3c276"></div>
<div style="left:438.20px;top:419.68px;width:80.00px;height:16.73px;background:#e7e6eb"></div>
<div style="left:518.20px;top:419.68px;width:79.80px;height:16.73px;background:#f3c276"></div>
<div style="left:598.00px;top:419.68px;width:239.50px;height:16.73px;background:#e7e6eb"></div>
<div style="left:837.50px;top:419.68px;width:158.10px;height:16.73px;background:#f3c276"></div>
<div style="left:37.00px;top:436.41px;width:162.00px;height:16.73px;background:#e7e6eb"></div>
<div style="left:199.00px;top:436.41px;width:239.20px;height:16.73px;background:#f3f2f6"></div>
<div style="left:438.20px;top:436.41px;width:80.00px;height:16.73px;background:#e7e6eb"></div>
<div style="left:518.20px;top:436.41px;width:79.80px;height:16.73px;background:#f3f2f6"></div>
<div style="left:598.00px;top:436.41px;width:239.50px;height:16.73px;background:#e7e6eb"></div>
<div style="left:837.50px;top:436.41px;width:158.10px;height:16.73px;background:#f3f2f6"></div>
<div style="left:37.00px;top:453.14px;width:162.00px;height:16.73px;background:#e7e6eb"></div>
<div style="left:199.00px;top:453.14px;width:239.20px;height:16.73px;background:#f3f2f6"></div>
<div style="left:438.20px;top:453.14px;width:80.00px;height:16.73px;background:#e7e6eb"></div>
<div style="left:518.20px;top:453.14px;width:79.80px;height:16.73px;background:#f3f2f6"></div>
<div style="left:598.00px;top:453.14px;width:239.50px;height:16.73px;background:#e7e6eb"></div>
<div style="left:837.50px;top:453.14px;width:158.10px;height:16.73px;background:#f3f2f6"></div>
<div style="left:37.00px;top:469.87px;width:162.00px;height:16.73px;background:#e7e6eb"></div>
<div style="left:199.00px;top:469.87px;width:239.20px;height:16.73px;background:#f3f2f6"></div>
<div style="left:438.20px;top:469.87px;width:80.00px;height:16.73px;background:#e7e6eb"></div>
<div style="left:518.20px;top:469.87px;width:79.80px;height:16.73px;background:#f3f2f6"></div>
<div style="left:598.00px;top:469.87px;width:239.50px;height:16.73px;background:#e7e6eb"></div>
<div style="left:837.50px;top:469.87px;width:158.10px;height:16.73px;background:#f3f2f6"></div>
<div style="left:37.00px;top:486.60px;width:162.00px;height:16.73px;background:#e7e6eb"></div>
<div style="left:199.00px;top:486.60px;width:239.20px;height:16.73px;background:#f3f2f6"></div>
<div style="left:438.20px;top:486.60px;width:80.00px;height:16.73px;background:#e7e6eb"></div>
<div style="left:518.20px;top:486.60px;width:79.80px;height:16.73px;background:#f3f2f6"></div>
<div style="left:598.00px;top:486.60px;width:239.50px;height:16.73px;background:#e7e6eb"></div>
<div style="left:837.50px;top:486.60px;width:158.10px;height:16.73px;background:#f3f2f6"></div>
<div style="left:37.00px;top:503.33px;width:162.00px;height:16.73px;background:#e7e6eb"></div>
<div style="left:199.00px;top:503.33px;width:239.20px;height:16.73px;background:#f3f2f6"></div>
<div style="left:438.20px;top:503.33px;width:80.00px;height:16.73px;background:#e7e6eb"></div>
<div style="left:518.20px;top:503.33px;width:79.80px;height:16.73px;background:#f3f2f6"></div>
<div style="left:598.00px;top:503.33px;width:239.50px;height:16.73px;background:#e7e6eb"></div>
<div style="left:837.50px;top:503.33px;width:158.10px;height:16.73px;background:#f3f2f6"></div>
<div style="left:37.00px;top:520.06px;width:162.00px;height:16.73px;background:#e7e6eb"></div>
<div style="left:199.00px;top:520.06px;width:239.20px;height:16.73px;background:#f3c276"></div>
<div style="left:438.20px;top:520.06px;width:80.00px;height:16.73px;background:#e7e6eb"></div>
<div style="left:518.20px;top:520.06px;width:79.80px;height:16.73px;background:#f3c276"></div>
<div style="left:598.00px;top:520.06px;width:239.50px;height:16.73px;background:#e7e6eb"></div>
<div style="left:837.50px;top:520.06px;width:158.10px;height:16.73px;background:#f3c276"></div>
<div style="left:37.00px;top:536.79px;width:162.00px;height:16.73px;background:#e7e6eb"></div>
<div style="left:199.00px;top:536.79px;width:239.20px;height:16.73px;background:#f3c276"></div>
<div style="left:438.20px;top:536.79px;width:80.00px;height:16.73px;background:#e7e6eb"></div>
<div style="left:518.20px;top:536.79px;width:79.80px;height:16.73px;background:#f3c276"></div>
<div style="left:598.00px;top:536.79px;width:239.50px;height:16.73px;background:#e7e6eb"></div>
<div style="left:837.50px;top:536.79px;width:158.10px;height:16.73px;background:#f3c276"></div>
<div style="left:37.00px;top:553.52px;width:162.00px;height:16.73px;background:#e7e6eb"></div>
<div style="left:199.00px;top:553.52px;width:239.20px;height:16.73px;background:#f3f2f6"></div>
<div style="left:438.20px;top:553.52px;width:80.00px;height:16.73px;background:#e7e6eb"></div>
<div style="left:518.20px;top:553.52px;width:79.80px;height:16.73px;background:#f3f2f6"></div>
<div style="left:598.00px;top:553.52px;width:239.50px;height:16.73px;background:#e7e6eb"></div>
<div style="left:837.50px;top:553.52px;width:158.10px;height:16.73px;background:#f3f2f6"></div>
<div style="left:37.00px;top:570.25px;width:162.00px;height:16.73px;background:#e7e6eb"></div>
<div style="left:199.00px;top:570.25px;width:239.20px;height:16.73px;background:#f3f2f6"></div>
<div style="left:438.20px;top:570.25px;width:80.00px;height:16.73px;background:#e7e6eb"></div>
<div style="left:518.20px;top:570.25px;width:79.80px;height:16.73px;background:#f3f2f6"></div>
<div style="left:598.00px;top:570.25px;width:239.50px;height:16.73px;background:#e7e6eb"></div>
<div style="left:837.50px;top:570.25px;width:158.10px;height:16.73px;background:#f3f2f6"></div>
<div style="left:37.00px;top:586.98px;width:162.00px;height:16.73px;background:#e7e6eb"></div>
<div style="left:199.00px;top:586.98px;width:239.20px;height:16.73px;background:#f3f2f6"></div>
<div style="left:438.20px;top:586.98px;width:80.00px;height:16.73px;background:#e7e6eb"></div>
<div style="left:518.20px;top:586.98px;width:79.80px;height:16.73px;background:#f3f2f6"></div>
<div style="left:598.00px;top:586.98px;width:239.50px;height:16.73px;background:#e7e6eb"></div>
<div style="left:837.50px;top:586.98px;width:158.10px;height:16.73px;background:#f3f2f6"></div>
<div style="left:37.00px;top:603.71px;width:162.00px;height:16.73px;background:#e7e6eb"></div>
<div style="left:199.00px;top:603.71px;width:239.20px;height:16.73px;background:#f3f2f6"></div>
<div style="left:438.20px;top:603.71px;width:80.00px;height:16.73px;background:#e7e6eb"></div>
<div style="left:518.20px;top:603.71px;width:79.80px;height:16.73px;background:#f3f2f6"></div>
<div style="left:598.00px;top:603.71px;width:239.50px;height:16.73px;background:#e7e6eb"></div>
<div style="left:837.50px;top:603.71px;width:158.10px;height:16.73px;background:#f3f2f6"></div>
<div style="left:37.00px;top:620.44px;width:162.00px;height:16.73px;background:#e7e6eb"></div>
<div style="left:199.00px;top:620.44px;width:239.20px;height:16.73px;background:#f3f2f6"></div>
<div style="left:438.20px;top:620.44px;width:80.00px;height:16.73px;background:#e7e6eb"></div>
<div style="left:518.20px;top:620.44px;width:79.80px;height:16.73px;background:#f3f2f6"></div>
<div style="left:598.00px;top:620.44px;width:239.50px;height:16.73px;background:#e7e6eb"></div>
<div style="left:837.50px;top:620.44px;width:158.10px;height:16.73px;background:#f3f2f6"></div>
<div style="left:37.00px;top:637.17px;width:162.00px;height:16.73px;background:#e7e6eb"></div>
<div style="left:199.00px;top:637.17px;width:239.20px;height:16.73px;background:#f3c276"></div>
<div style="left:438.20px;top:637.17px;width:80.00px;height:16.73px;background:#e7e6eb"></div>
<div style="left:518.20px;top:637.17px;width:79.80px;height:16.73px;background:#f3c276"></div>
<div style="left:598.00px;top:637.17px;width:239.50px;height:16.73px;background:#e7e6eb"></div>
<div style="left:837.50px;top:637.17px;width:158.10px;height:16.73px;background:#f3c276"></div>
<div style="left:37.00px;top:653.90px;width:162.00px;height:16.73px;background:#e7e6eb"></div>
<div style="left:199.00px;top:653.90px;width:239.20px;height:16.73px;background:#f3c276"></div>
<div style="left:438.20px;top:653.90px;width:80.00px;height:16.73px;background:#e7e6eb"></div>
<div style="left:518.20px;top:653.90px;width:79.80px;height:16.73px;background:#f3c276"></div>
<div style="left:598.00px;top:653.90px;width:239.50px;height:16.73px;background:#e7e6eb"></div>
<div style="left:837.50px;top:653.90px;width:158.10px;height:16.73px;background:#f3c276"></div>
<div style="left:37.00px;top:670.63px;width:162.00px;height:16.73px;background:#e7e6eb"></div>
<div style="left:199.00px;top:670.63px;width:239.20px;height:16.73px;background:#f3f2f6"></div>
<div style="left:438.20px;top:670.63px;width:80.00px;height:16.73px;background:#e7e6eb"></div>
<div style="left:518.20px;top:670.63px;width:79.80px;height:16.73px;background:#f3f2f6"></div>
<div style="left:598.00px;top:670.63px;width:239.50px;height:16.73px;background:#e7e6eb"></div>
<div style="left:837.50px;top:670.63px;width:158.10px;height:16.73px;background:#f3f2f6"></div>
<div style="left:37.00px;top:687.36px;width:162.00px;height:16.73px;background:#e7e6eb"></div>
<div style="left:199.00px;top:687.36px;width:239.20px;height:16.73px;background:#f3f2f6"></div>
<div style="left:438.20px;top:687.36px;width:80.00px;height:16.73px;background:#e7e6eb"></div>
<div style="left:518.20px;top:687.36px;width:79.80px;height:16.73px;background:#f3f2f6"></div>
<div style="left:598.00px;top:687.36px;width:239.50px;height:16.73px;background:#e7e6eb"></div>
<div style="left:837.50px;top:687.36px;width:158.10px;height:16.73px;background:#f3f2f6"></div>
<div style="left:37.00px;top:704.09px;width:162.00px;height:16.73px;background:#e7e6eb"></div>
<div style="left:199.00px;top:704.09px;width:239.20px;height:16.73px;background:#f3f2f6"></div>
<div style="left:438.20px;top:704.09px;width:80.00px;height:16.73px;background:#e7e6eb"></div>
<div style="left:518.20px;top:704.09px;width:79.80px;height:16.73px;background:#f3f2f6"></div>
<div style="left:598.00px;top:704.09px;width:239.50px;height:16.73px;background:#e7e6eb"></div>
<div style="left:837.50px;top:704.09px;width:158.10px;height:16.73px;background:#f3f2f6"></div>
<div style="left:37.00px;top:720.82px;width:162.00px;height:16.73px;background:#e7e6eb"></div>
<div style="left:199.00px;top:720.82px;width:239.20px;height:16.73px;background:#f3f2f6"></div>
<div style="left:438.20px;top:720.82px;width:80.00px;height:16.73px;background:#e7e6eb"></div>
<div style="left:518.20px;top:720.82px;width:79.80px;height:16.73px;background:#f3f2f6"></div>
<div style="left:598.00px;top:720.82px;width:239.50px;height:16.73px;background:#e7e6eb"></div>
<div style="left:837.50px;top:720.82px;width:158.10px;height:16.73px;background:#f3f2f6"></div>
<div style="left:37.00px;top:737.55px;width:162.00px;height:16.73px;background:#e7e6eb"></div>
<div style="left:199.00px;top:737.55px;width:239.20px;height:16.73px;background:#f3f2f6"></div>
<div style="left:438.20px;top:737.55px;width:80.00px;height:16.73px;background:#e7e6eb"></div>
<div style="left:518.20px;top:737.55px;width:79.80px;height:16.73px;background:#f3f2f6"></div>
<div style="left:598.00px;top:737.55px;width:239.50px;height:16.73px;background:#e7e6eb"></div>
<div style="left:837.50px;top:737.55px;width:158.10px;height:16.73px;background:#f3f2f6"></div>
<div style="left:37.00px;top:754.28px;width:162.00px;height:16.73px;background:#e7e6eb"></div>
<div style="left:199.00px;top:754.28px;width:239.20px;height:16.73px;background:#f3c276"></div>
<div style="left:438.20px;top:754.28px;width:80.00px;height:16.73px;background:#e7e6eb"></div>
<div style="left:518.20px;top:754.28px;width:79.80px;height:16.73px;background:#f3c276"></div>
<div style="left:598.00px;top:754.28px;width:239.50px;height:16.73px;background:#e7e6eb"></div>
<div style="left:837.50px;top:754.28px;width:158.10px;height:16.73px;background:#f3c276"></div>
<div style="left:37.00px;top:771.01px;width:162.00px;height:16.73px;background:#e7e6eb"></div>
<div style="left:199.00px;top:771.01px;width:239.20px;height:16.73px;background:#f3c276"></div>
<div style="left:438.20px;top:771.01px;width:80.00px;height:16.73px;background:#e7e6eb"></div>
<div style="left:518.20px;top:771.01px;width:79.80px;height:16.73px;background:#f3c276"></div>
<div style="left:598.00px;top:771.01px;width:239.50px;height:16.73px;background:#e7e6eb"></div>
<div style="left:837.50px;top:771.01px;width:158.10px;height:16.73px;background:#f3c276"></div>
<div style="left:36.50px;top:151.50px;width:959.60px;height:1.00px;background:#1c1c22"></div>
<div style="left:36.50px;top:168.23px;width:959.60px;height:1.00px;background:#1c1c22"></div>
<div style="left:36.50px;top:184.96px;width:959.60px;height:1.00px;background:#1c1c22"></div>
<div style="left:36.50px;top:201.69px;width:959.60px;height:1.00px;background:#1c1c22"></div>
<div style="left:36.50px;top:218.42px;width:959.60px;height:1.00px;background:#1c1c22"></div>
<div style="left:36.50px;top:235.15px;width:959.60px;height:1.00px;background:#1c1c22"></div>
<div style="left:36.50px;top:251.88px;width:959.60px;height:1.00px;background:#1c1c22"></div>
<div style="left:36.50px;top:151.50px;width:1.00px;height:101.38px;background:#1c1c22"></div>
<div style="left:357.90px;top:151.50px;width:1.00px;height:101.38px;background:#1c1c22"></div>
<div style="left:837.00px;top:151.50px;width:1.00px;height:101.38px;background:#1c1c22"></div>
<div style="left:995.10px;top:151.50px;width:1.00px;height:101.38px;background:#1c1c22"></div>
<div style="left:198.50px;top:168.23px;width:1.00px;height:84.65px;background:#1c1c22"></div>
<div style="left:437.70px;top:168.23px;width:1.00px;height:84.65px;background:#1c1c22"></div>
<div style="left:517.70px;top:168.23px;width:1.00px;height:84.65px;background:#1c1c22"></div>
<div style="left:597.50px;top:168.23px;width:1.00px;height:84.65px;background:#1c1c22"></div>
<div style="left:677.30px;top:168.23px;width:1.00px;height:34.46px;background:#1c1c22"></div>
<div style="left:757.10px;top:168.23px;width:1.00px;height:34.46px;background:#1c1c22"></div>
<div style="left:677.30px;top:202.69px;width:1.00px;height:49.19px;background:#c6c5cc"></div>
<div style="left:757.10px;top:202.69px;width:1.00px;height:49.19px;background:#c6c5cc"></div>
<div style="left:598.50px;top:218.42px;width:238.50px;height:1.00px;background:#c6c5cc"></div>
<div style="left:598.50px;top:235.15px;width:238.50px;height:1.00px;background:#c6c5cc"></div>
<div style="left:36.50px;top:268.61px;width:959.60px;height:1.00px;background:#1c1c22"></div>
<div style="left:36.50px;top:285.34px;width:959.60px;height:1.00px;background:#1c1c22"></div>
<div style="left:36.50px;top:302.07px;width:959.60px;height:1.00px;background:#1c1c22"></div>
<div style="left:36.50px;top:318.80px;width:959.60px;height:1.00px;background:#1c1c22"></div>
<div style="left:36.50px;top:335.53px;width:959.60px;height:1.00px;background:#1c1c22"></div>
<div style="left:36.50px;top:352.26px;width:959.60px;height:1.00px;background:#1c1c22"></div>
<div style="left:36.50px;top:368.99px;width:959.60px;height:1.00px;background:#1c1c22"></div>
<div style="left:36.50px;top:385.72px;width:959.60px;height:1.00px;background:#1c1c22"></div>
<div style="left:36.50px;top:402.45px;width:959.60px;height:1.00px;background:#1c1c22"></div>
<div style="left:36.50px;top:419.18px;width:959.60px;height:1.00px;background:#1c1c22"></div>
<div style="left:36.50px;top:435.91px;width:959.60px;height:1.00px;background:#1c1c22"></div>
<div style="left:36.50px;top:452.64px;width:959.60px;height:1.00px;background:#1c1c22"></div>
<div style="left:36.50px;top:469.37px;width:959.60px;height:1.00px;background:#1c1c22"></div>
<div style="left:36.50px;top:486.10px;width:959.60px;height:1.00px;background:#1c1c22"></div>
<div style="left:36.50px;top:502.83px;width:959.60px;height:1.00px;background:#1c1c22"></div>
<div style="left:36.50px;top:519.56px;width:959.60px;height:1.00px;background:#1c1c22"></div>
<div style="left:36.50px;top:536.29px;width:959.60px;height:1.00px;background:#1c1c22"></div>
<div style="left:36.50px;top:553.02px;width:959.60px;height:1.00px;background:#1c1c22"></div>
<div style="left:36.50px;top:569.75px;width:959.60px;height:1.00px;background:#1c1c22"></div>
<div style="left:36.50px;top:586.48px;width:959.60px;height:1.00px;background:#1c1c22"></div>
<div style="left:36.50px;top:603.21px;width:959.60px;height:1.00px;background:#1c1c22"></div>
<div style="left:36.50px;top:619.94px;width:959.60px;height:1.00px;background:#1c1c22"></div>
<div style="left:36.50px;top:636.67px;width:959.60px;height:1.00px;background:#1c1c22"></div>
<div style="left:36.50px;top:653.40px;width:959.60px;height:1.00px;background:#1c1c22"></div>
<div style="left:36.50px;top:670.13px;width:959.60px;height:1.00px;background:#1c1c22"></div>
<div style="left:36.50px;top:686.86px;width:959.60px;height:1.00px;background:#1c1c22"></div>
<div style="left:36.50px;top:703.59px;width:959.60px;height:1.00px;background:#1c1c22"></div>
<div style="left:36.50px;top:720.32px;width:959.60px;height:1.00px;background:#1c1c22"></div>
<div style="left:36.50px;top:737.05px;width:959.60px;height:1.00px;background:#1c1c22"></div>
<div style="left:36.50px;top:753.78px;width:959.60px;height:1.00px;background:#1c1c22"></div>
<div style="left:36.50px;top:770.51px;width:959.60px;height:1.00px;background:#1c1c22"></div>
<div style="left:36.50px;top:787.24px;width:959.60px;height:1.00px;background:#1c1c22"></div>
<div style="left:36.50px;top:268.61px;width:1.00px;height:519.63px;background:#1c1c22"></div>
<div style="left:116.70px;top:268.61px;width:1.00px;height:519.63px;background:#1c1c22"></div>
<div style="left:198.50px;top:268.61px;width:1.00px;height:519.63px;background:#1c1c22"></div>
<div style="left:278.30px;top:268.61px;width:1.00px;height:519.63px;background:#1c1c22"></div>
<div style="left:357.90px;top:268.61px;width:1.00px;height:519.63px;background:#1c1c22"></div>
<div style="left:437.70px;top:268.61px;width:1.00px;height:519.63px;background:#1c1c22"></div>
<div style="left:517.70px;top:268.61px;width:1.00px;height:519.63px;background:#1c1c22"></div>
<div style="left:597.50px;top:268.61px;width:1.00px;height:519.63px;background:#1c1c22"></div>
<div style="left:677.30px;top:268.61px;width:1.00px;height:519.63px;background:#1c1c22"></div>
<div style="left:757.10px;top:268.61px;width:1.00px;height:519.63px;background:#1c1c22"></div>
<div style="left:837.00px;top:268.61px;width:1.00px;height:519.63px;background:#1c1c22"></div>
<div style="left:995.10px;top:268.61px;width:1.00px;height:519.63px;background:#1c1c22"></div>
<div class="t" style="left:37.00px;width:80.20px;top:119.6px;text-align:center;font-size:10.8px;color:#111">A</div>
<div class="t" style="left:117.20px;width:81.80px;top:119.6px;text-align:center;font-size:10.8px;color:#111">C</div>
<div style="left:116.70px;top:116.00px;width:1.00px;height:16.00px;background:#8e8d96"></div>
<div class="t" style="left:199.00px;width:79.80px;top:119.6px;text-align:center;font-size:10.8px;color:#111">D</div>
<div style="left:198.50px;top:116.00px;width:1.00px;height:16.00px;background:#8e8d96"></div>
<div class="t" style="left:278.80px;width:79.60px;top:119.6px;text-align:center;font-size:10.8px;color:#111">E</div>
<div style="left:278.30px;top:116.00px;width:1.00px;height:16.00px;background:#8e8d96"></div>
<div class="t" style="left:358.40px;width:79.80px;top:119.6px;text-align:center;font-size:10.8px;color:#111">F</div>
<div style="left:357.90px;top:116.00px;width:1.00px;height:16.00px;background:#8e8d96"></div>
<div class="t" style="left:438.20px;width:80.00px;top:119.6px;text-align:center;font-size:11.2px;font-weight:bold;color:#000">G</div>
<div style="left:437.70px;top:116.00px;width:1.00px;height:16.00px;background:#8e8d96"></div>
<div class="t" style="left:518.20px;width:79.80px;top:119.6px;text-align:center;font-size:10.8px;color:#111">H</div>
<div style="left:517.70px;top:116.00px;width:1.00px;height:16.00px;background:#8e8d96"></div>
<div class="t" style="left:598.00px;width:79.80px;top:119.6px;text-align:center;font-size:10.8px;color:#111">I</div>
<div style="left:597.50px;top:116.00px;width:1.00px;height:16.00px;background:#8e8d96"></div>
<div class="t" style="left:677.80px;width:79.80px;top:119.6px;text-align:center;font-size:10.8px;color:#111">J</div>
<div style="left:677.30px;top:116.00px;width:1.00px;height:16.00px;background:#8e8d96"></div>
<div class="t" style="left:757.60px;width:79.90px;top:119.6px;text-align:center;font-size:10.8px;color:#111">K</div>
<div style="left:757.10px;top:116.00px;width:1.00px;height:16.00px;background:#8e8d96"></div>
<div class="t" style="left:837.50px;width:158.10px;top:119.6px;text-align:center;font-size:10.8px;color:#111">L</div>
<div style="left:837.00px;top:116.00px;width:1.00px;height:16.00px;background:#8e8d96"></div>
<div style="left:5.00px;top:115.50px;width:991.00px;height:1.00px;background:#8e8d96"></div>
<div style="left:116.20px;top:116.00px;width:2.00px;height:16.00px;background:#74737c"></div>
<div style="left:5.00px;top:131.50px;width:991.00px;height:1.00px;background:#8e8d96"></div>
<div style="left:4.00px;top:116.00px;width:1.00px;height:671.70px;background:#9a99a2"></div>
<div style="left:36.50px;top:116.00px;width:1.00px;height:671.70px;background:#8e8d96"></div>
<div style="left:5.00px;top:151.50px;width:32.00px;height:1.00px;background:#9e9da6"></div>
<div class="t" style="left:5px;width:32px;top:138.20px;text-align:center;font-size:10.8px;color:#2a2a2a">1</div>
<div style="left:5.00px;top:168.23px;width:32.00px;height:1.00px;background:#9e9da6"></div>
<div class="t" style="left:5px;width:32px;top:156.56px;text-align:center;font-size:10.8px;color:#2a2a2a">2</div>
<div style="left:5.00px;top:184.96px;width:32.00px;height:1.00px;background:#9e9da6"></div>
<div class="t" style="left:5px;width:32px;top:173.29px;text-align:center;font-size:10.8px;color:#2a2a2a">3</div>
<div style="left:5.00px;top:201.69px;width:32.00px;height:1.00px;background:#9e9da6"></div>
<div class="t" style="left:5px;width:32px;top:190.02px;text-align:center;font-size:10.8px;color:#2a2a2a">4</div>
<div style="left:5.00px;top:218.42px;width:32.00px;height:1.00px;background:#9e9da6"></div>
<div class="t" style="left:5px;width:32px;top:206.75px;text-align:center;font-size:10.8px;color:#2a2a2a">5</div>
<div style="left:5.00px;top:235.15px;width:32.00px;height:1.00px;background:#9e9da6"></div>
<div class="t" style="left:5px;width:32px;top:223.49px;text-align:center;font-size:10.8px;color:#2a2a2a">6</div>
<div style="left:5.00px;top:251.88px;width:32.00px;height:1.00px;background:#9e9da6"></div>
<div class="t" style="left:5px;width:32px;top:240.21px;text-align:center;font-size:10.8px;color:#2a2a2a">7</div>
<div style="left:5.00px;top:268.61px;width:32.00px;height:1.00px;background:#9e9da6"></div>
<div class="t" style="left:5px;width:32px;top:256.94px;text-align:center;font-size:10.8px;color:#2a2a2a">8</div>
<div style="left:5.00px;top:285.34px;width:32.00px;height:1.00px;background:#9e9da6"></div>
<div class="t" style="left:5px;width:32px;top:273.68px;text-align:center;font-size:10.8px;color:#2a2a2a">9</div>
<div style="left:5.00px;top:302.07px;width:32.00px;height:1.00px;background:#9e9da6"></div>
<div class="t" style="left:5px;width:32px;top:290.41px;text-align:center;font-size:10.8px;color:#2a2a2a">10</div>
<div style="left:5.00px;top:318.80px;width:32.00px;height:1.00px;background:#9e9da6"></div>
<div class="t" style="left:5px;width:32px;top:307.13px;text-align:center;font-size:10.8px;color:#2a2a2a">11</div>
<div style="left:5.00px;top:335.53px;width:32.00px;height:1.00px;background:#9e9da6"></div>
<div class="t" style="left:5px;width:32px;top:323.87px;text-align:center;font-size:10.8px;color:#2a2a2a">12</div>
<div style="left:5.00px;top:352.26px;width:32.00px;height:1.00px;background:#9e9da6"></div>
<div class="t" style="left:5px;width:32px;top:340.59px;text-align:center;font-size:10.8px;color:#2a2a2a">13</div>
<div style="left:5.00px;top:368.99px;width:32.00px;height:1.00px;background:#9e9da6"></div>
<div class="t" style="left:5px;width:32px;top:357.32px;text-align:center;font-size:10.8px;color:#2a2a2a">14</div>
<div style="left:5.00px;top:385.72px;width:32.00px;height:1.00px;background:#9e9da6"></div>
<div class="t" style="left:5px;width:32px;top:374.06px;text-align:center;font-size:10.8px;color:#2a2a2a">15</div>
<div style="left:5.00px;top:402.45px;width:32.00px;height:1.00px;background:#9e9da6"></div>
<div class="t" style="left:5px;width:32px;top:390.79px;text-align:center;font-size:10.8px;color:#2a2a2a">16</div>
<div style="left:5.00px;top:419.18px;width:32.00px;height:1.00px;background:#9e9da6"></div>
<div class="t" style="left:5px;width:32px;top:407.52px;text-align:center;font-size:10.8px;color:#2a2a2a">17</div>
<div style="left:5.00px;top:435.91px;width:32.00px;height:1.00px;background:#9e9da6"></div>
<div class="t" style="left:5px;width:32px;top:424.25px;text-align:center;font-size:10.8px;color:#2a2a2a">18</div>
<div style="left:5.00px;top:452.64px;width:32.00px;height:1.00px;background:#9e9da6"></div>
<div class="t" style="left:5px;width:32px;top:440.98px;text-align:center;font-size:10.8px;color:#2a2a2a">19</div>
<div style="left:5.00px;top:469.37px;width:32.00px;height:1.00px;background:#9e9da6"></div>
<div class="t" style="left:5px;width:32px;top:457.70px;text-align:center;font-size:10.8px;color:#2a2a2a">20</div>
<div style="left:5.00px;top:486.10px;width:32.00px;height:1.00px;background:#9e9da6"></div>
<div class="t" style="left:5px;width:32px;top:474.44px;text-align:center;font-size:10.8px;color:#2a2a2a">21</div>
<div style="left:5.00px;top:502.83px;width:32.00px;height:1.00px;background:#9e9da6"></div>
<div class="t" style="left:5px;width:32px;top:491.17px;text-align:center;font-size:10.8px;color:#2a2a2a">22</div>
<div style="left:5.00px;top:519.56px;width:32.00px;height:1.00px;background:#9e9da6"></div>
<div class="t" style="left:5px;width:32px;top:507.89px;text-align:center;font-size:10.8px;color:#2a2a2a">23</div>
<div style="left:5.00px;top:536.29px;width:32.00px;height:1.00px;background:#9e9da6"></div>
<div class="t" style="left:5px;width:32px;top:524.62px;text-align:center;font-size:10.8px;color:#2a2a2a">24</div>
<div style="left:5.00px;top:553.02px;width:32.00px;height:1.00px;background:#9e9da6"></div>
<div class="t" style="left:5px;width:32px;top:541.36px;text-align:center;font-size:10.8px;color:#2a2a2a">25</div>
<div style="left:5.00px;top:569.75px;width:32.00px;height:1.00px;background:#9e9da6"></div>
<div class="t" style="left:5px;width:32px;top:558.09px;text-align:center;font-size:10.8px;color:#2a2a2a">26</div>
<div style="left:5.00px;top:586.48px;width:32.00px;height:1.00px;background:#9e9da6"></div>
<div class="t" style="left:5px;width:32px;top:574.82px;text-align:center;font-size:10.8px;color:#2a2a2a">27</div>
<div style="left:5.00px;top:603.21px;width:32.00px;height:1.00px;background:#9e9da6"></div>
<div class="t" style="left:5px;width:32px;top:591.55px;text-align:center;font-size:10.8px;color:#2a2a2a">28</div>
<div style="left:5.00px;top:619.94px;width:32.00px;height:1.00px;background:#9e9da6"></div>
<div class="t" style="left:5px;width:32px;top:608.28px;text-align:center;font-size:10.8px;color:#2a2a2a">29</div>
<div style="left:5.00px;top:636.67px;width:32.00px;height:1.00px;background:#9e9da6"></div>
<div class="t" style="left:5px;width:32px;top:625.01px;text-align:center;font-size:10.8px;color:#2a2a2a">30</div>
<div style="left:5.00px;top:653.40px;width:32.00px;height:1.00px;background:#9e9da6"></div>
<div class="t" style="left:5px;width:32px;top:641.74px;text-align:center;font-size:10.8px;color:#2a2a2a">31</div>
<div style="left:5.00px;top:670.13px;width:32.00px;height:1.00px;background:#9e9da6"></div>
<div class="t" style="left:5px;width:32px;top:658.47px;text-align:center;font-size:10.8px;color:#2a2a2a">32</div>
<div style="left:5.00px;top:686.86px;width:32.00px;height:1.00px;background:#9e9da6"></div>
<div class="t" style="left:5px;width:32px;top:675.20px;text-align:center;font-size:10.8px;color:#2a2a2a">33</div>
<div style="left:5.00px;top:703.59px;width:32.00px;height:1.00px;background:#9e9da6"></div>
<div class="t" style="left:5px;width:32px;top:691.93px;text-align:center;font-size:10.8px;color:#2a2a2a">34</div>
<div style="left:5.00px;top:720.32px;width:32.00px;height:1.00px;background:#9e9da6"></div>
<div class="t" style="left:5px;width:32px;top:708.66px;text-align:center;font-size:10.8px;color:#2a2a2a">35</div>
<div style="left:5.00px;top:737.05px;width:32.00px;height:1.00px;background:#9e9da6"></div>
<div class="t" style="left:5px;width:32px;top:725.39px;text-align:center;font-size:10.8px;color:#2a2a2a">36</div>
<div style="left:5.00px;top:753.78px;width:32.00px;height:1.00px;background:#9e9da6"></div>
<div class="t" style="left:5px;width:32px;top:742.12px;text-align:center;font-size:10.8px;color:#2a2a2a">37</div>
<div style="left:5.00px;top:770.51px;width:32.00px;height:1.00px;background:#9e9da6"></div>
<div class="t" style="left:5px;width:32px;top:758.85px;text-align:center;font-size:10.8px;color:#2a2a2a">38</div>
<div style="left:5.00px;top:787.24px;width:32.00px;height:1.00px;background:#9e9da6"></div>
<div class="t" style="left:5px;width:32px;top:775.58px;text-align:center;font-size:10.8px;color:#2a2a2a">39</div>
<div class="t" style="left:39.5px;top:134.6px;font-size:15.6px;font-weight:bold;color:#000">Arbeitszeitdokumentation</div>
<div class="t" style="right:26.00px;top:134.6px;font-size:16.2px;color:#000">November 2008</div>
<div class="h" style="left:37.00px;width:321.40px;top:154.18px;text-align:center;">Grunddaten</div>
<div class="h" style="left:358.40px;width:479.10px;top:154.18px;text-align:center;">Tägliche Soll-Arbeitszeit/Pause</div>
<div class="h" style="left:839.30px;top:154.18px;">Funktionen:</div>
<div class="c" style="left:38.80px;top:171.81px;">Personalnummer:</div>
<div class="c" style="left:200.80px;top:171.81px;">123456789</div>
<div class="c" style="left:360.20px;top:171.81px;">Montag:</div>
<div class="c" style="right:503.10px;top:171.81px;">9,00</div>
<div class="c" style="right:423.30px;top:171.81px;">0,5</div>
<div class="c" style="left:839.30px;top:171.81px;">U = Urlaub</div>
<div class="c" style="left:38.80px;top:188.54px;">Mitarbeiter:</div>
<div class="c" style="left:200.80px;top:188.54px;">Manfred Mustermann</div>
<div class="c" style="left:360.20px;top:188.54px;">Dienstag:</div>
<div class="c" style="right:503.10px;top:188.54px;">8,00</div>
<div class="c" style="right:423.30px;top:188.54px;">0,5</div>
<div class="c" style="left:839.30px;top:188.54px;">Ü = Überstundenfrei</div>
<div class="c" style="left:38.80px;top:205.27px;">Abteilung:</div>
<div class="c" style="left:200.80px;top:205.27px;">EDV/Organisation</div>
<div class="c" style="left:360.20px;top:205.27px;">Mittwoch:</div>
<div class="c" style="right:503.10px;top:205.27px;">8,00</div>
<div class="c" style="right:423.30px;top:205.27px;">0,5</div>
<div class="c" style="left:839.30px;top:205.27px;">F = Feiertag</div>
<div class="c" style="left:38.80px;top:222.00px;">Wochenarbeitszeit:</div>
<div class="c" style="left:200.80px;top:222.00px;">38,50</div>
<div class="c" style="left:360.20px;top:222.00px;">Donnerstag:</div>
<div class="c" style="right:503.10px;top:222.00px;">8,00</div>
<div class="c" style="right:423.30px;top:222.00px;">0,5</div>
<div class="c" style="left:839.30px;top:222.00px;">L = Fortbildung</div>
<div class="c" style="left:38.80px;top:238.73px;">Übertrag:</div>
<div class="c" style="left:200.80px;top:238.73px;">-1655,50</div>
<div class="c" style="left:360.20px;top:238.73px;">Freitag:</div>
<div class="c" style="right:503.10px;top:238.73px;">5,50</div>
<div class="c" style="right:423.30px;top:238.73px;">0,0</div>
<div class="c" style="left:839.30px;top:238.73px;">K = Krankheit</div>
<svg style="left:0;top:0" width="1020" height="812"><path d="M863.0 200.1L865.0 201.4L867.0 200.1L869.0 201.4L871.0 200.1L873.0 201.4L875.0 200.1L877.0 201.4L879.0 200.1L881.0 201.4L883.0 200.1L885.0 201.4L887.0 200.1L889.0 201.4L891.0 200.1L893.0 201.4L895.0 200.1L897.0 201.4L899.0 200.1L901.0 201.4L903.0 200.1L905.0 201.4L907.0 200.1L909.0 201.4L911.0 200.1L913.0 201.4L915.0 200.1L917.0 201.4L919.0 200.1L921.0 201.4L923.0 200.1L925.0 201.4L927.0 200.1L929.0 201.4L931.0 200.1L933.0 201.4L935.0 200.1L937.0 201.4L939.0 200.1L941.0 201.4L943.0 200.1L945.0 201.4L947.0 200.1L949.0 201.4L951.0 200.1" fill="none" stroke="#d83a3a" stroke-width="1"/></svg>
<div class="c" style="left:599.80px;top:171.81px;">Samstag:</div>
<div class="c" style="left:599.80px;top:188.54px;">Sonntag:</div>
<div class="c" style="right:263.70px;top:171.81px;">0,0</div>
<div class="c" style="right:263.70px;top:188.54px;">0,0</div>
<div class="c" style="right:183.80px;top:171.81px;">0,0</div>
<div class="c" style="right:183.80px;top:188.54px;">0,0</div>
<div class="h" style="left:38.80px;top:271.29px;">Datum</div>
<div class="h" style="left:119.00px;top:271.29px;">Wochentag</div>
<div class="h" style="left:200.80px;top:271.29px;">Beginn</div>
<div class="h" style="left:280.60px;top:271.29px;">Ende</div>
<div class="h" style="left:360.20px;top:271.29px;">Korrektur</div>
<div class="h" style="left:440.00px;top:271.29px;">Ist</div>
<div class="h" style="left:520.00px;top:271.29px;">Funktion</div>
<div class="h" style="left:599.80px;top:271.29px;">Soll</div>
<div class="h" style="left:679.60px;top:271.29px;">Differenz</div>
<div class="h" style="left:759.40px;top:271.29px;">Saldo</div>
<div class="h" style="left:839.30px;top:271.29px;">Bemerkung</div>
<div class="c" style="right:904.10px;top:288.92px;">01.11.2008</div>
<div class="c" style="left:119.00px;top:288.92px;">Samstag</div>
<div class="c" style="right:503.10px;top:288.92px;">0,00</div>
<div class="c" style="right:343.50px;top:288.92px;">0,00</div>
<div class="c" style="right:263.70px;top:288.92px;">0,00</div>
<div class="c" style="right:183.80px;top:288.92px;">-1655,50</div>
<div class="c" style="right:904.10px;top:305.65px;">02.11.2008</div>
<div class="c" style="left:119.00px;top:305.65px;">Sonntag</div>
<div class="c" style="right:503.10px;top:305.65px;">0,00</div>
<div class="c" style="right:343.50px;top:305.65px;">0,00</div>
<div class="c" style="right:263.70px;top:305.65px;">0,00</div>
<div class="c" style="right:183.80px;top:305.65px;">-1655,50</div>
<div class="c" style="right:904.10px;top:322.38px;">03.11.2008</div>
<div class="c" style="left:119.00px;top:322.38px;">Montag</div>
<div class="c" style="right:503.10px;top:322.38px;">-0,50</div>
<div class="c" style="right:343.50px;top:322.38px;">9,00</div>
<div class="c" style="right:263.70px;top:322.38px;">-9,50</div>
<div class="c" style="right:183.80px;top:322.38px;">-1665,00</div>
<div class="c" style="right:904.10px;top:339.11px;">04.11.2008</div>
<div class="c" style="left:119.00px;top:339.11px;">Dienstag</div>
<div class="c" style="right:503.10px;top:339.11px;">-0,50</div>
<div class="c" style="right:343.50px;top:339.11px;">8,00</div>
<div class="c" style="right:263.70px;top:339.11px;">-8,50</div>
<div class="c" style="right:183.80px;top:339.11px;">-1673,50</div>
<div class="c" style="right:904.10px;top:355.84px;">05.11.2008</div>
<div class="c" style="left:119.00px;top:355.84px;">Mittwoch</div>
<div class="c" style="right:503.10px;top:355.84px;">-0,50</div>
<div class="c" style="right:343.50px;top:355.84px;">8,00</div>
<div class="c" style="right:263.70px;top:355.84px;">-8,50</div>
<div class="c" style="right:183.80px;top:355.84px;">-1682,00</div>
<div class="c" style="right:904.10px;top:372.57px;">06.11.2008</div>
<div class="c" style="left:119.00px;top:372.57px;">Donnerstag</div>
<div class="c" style="right:503.10px;top:372.57px;">-0,50</div>
<div class="c" style="right:343.50px;top:372.57px;">8,00</div>
<div class="c" style="right:263.70px;top:372.57px;">-8,50</div>
<div class="c" style="right:183.80px;top:372.57px;">-1690,50</div>
<div class="c" style="right:904.10px;top:389.30px;">07.11.2008</div>
<div class="c" style="left:119.00px;top:389.30px;">Freitag</div>
<div class="c" style="right:503.10px;top:389.30px;">0,00</div>
<div class="c" style="right:343.50px;top:389.30px;">5,50</div>
<div class="c" style="right:263.70px;top:389.30px;">-5,50</div>
<div class="c" style="right:183.80px;top:389.30px;">-1696,00</div>
<div class="c" style="right:904.10px;top:406.03px;">08.11.2008</div>
<div class="c" style="left:119.00px;top:406.03px;">Samstag</div>
<div class="c" style="right:503.10px;top:406.03px;">0,00</div>
<div class="c" style="right:343.50px;top:406.03px;">0,00</div>
<div class="c" style="right:263.70px;top:406.03px;">0,00</div>
<div class="c" style="right:183.80px;top:406.03px;">-1696,00</div>
<div class="c" style="right:904.10px;top:422.76px;">09.11.2008</div>
<div class="c" style="left:119.00px;top:422.76px;">Sonntag</div>
<div class="c" style="right:503.10px;top:422.76px;">0,00</div>
<div class="c" style="right:343.50px;top:422.76px;">0,00</div>
<div class="c" style="right:263.70px;top:422.76px;">0,00</div>
<div class="c" style="right:183.80px;top:422.76px;">-1696,00</div>
<div class="c" style="right:904.10px;top:439.49px;">10.11.2008</div>
<div class="c" style="left:119.00px;top:439.49px;">Montag</div>
<div class="c" style="right:503.10px;top:439.49px;">-0,50</div>
<div class="c" style="right:343.50px;top:439.49px;">9,00</div>
<div class="c" style="right:263.70px;top:439.49px;">-9,50</div>
<div class="c" style="right:183.80px;top:439.49px;">-1705,50</div>
<div class="c" style="right:904.10px;top:456.22px;">11.11.2008</div>
<div class="c" style="left:119.00px;top:456.22px;">Dienstag</div>
<div class="c" style="right:503.10px;top:456.22px;">-0,50</div>
<div class="c" style="right:343.50px;top:456.22px;">8,00</div>
<div class="c" style="right:263.70px;top:456.22px;">-8,50</div>
<div class="c" style="right:183.80px;top:456.22px;">-1714,00</div>
<div class="c" style="right:904.10px;top:472.95px;">12.11.2008</div>
<div class="c" style="left:119.00px;top:472.95px;">Mittwoch</div>
<div class="c" style="right:503.10px;top:472.95px;">-0,50</div>
<div class="c" style="right:343.50px;top:472.95px;">8,00</div>
<div class="c" style="right:263.70px;top:472.95px;">-8,50</div>
<div class="c" style="right:183.80px;top:472.95px;">-1722,50</div>
<div class="c" style="right:904.10px;top:489.68px;">13.11.2008</div>
<div class="c" style="left:119.00px;top:489.68px;">Donnerstag</div>
<div class="c" style="right:503.10px;top:489.68px;">-0,50</div>
<div class="c" style="right:343.50px;top:489.68px;">8,00</div>
<div class="c" style="right:263.70px;top:489.68px;">-8,50</div>
<div class="c" style="right:183.80px;top:489.68px;">-1731,00</div>
<div class="c" style="right:904.10px;top:506.41px;">14.11.2008</div>
<div class="c" style="left:119.00px;top:506.41px;">Freitag</div>
<div class="c" style="right:503.10px;top:506.41px;">0,00</div>
<div class="c" style="right:343.50px;top:506.41px;">5,50</div>
<div class="c" style="right:263.70px;top:506.41px;">-5,50</div>
<div class="c" style="right:183.80px;top:506.41px;">-1736,50</div>
<div class="c" style="right:904.10px;top:523.14px;">15.11.2008</div>
<div class="c" style="left:119.00px;top:523.14px;">Samstag</div>
<div class="c" style="right:503.10px;top:523.14px;">0,00</div>
<div class="c" style="right:343.50px;top:523.14px;">0,00</div>
<div class="c" style="right:263.70px;top:523.14px;">0,00</div>
<div class="c" style="right:183.80px;top:523.14px;">-1736,50</div>
<div class="c" style="right:904.10px;top:539.87px;">16.11.2008</div>
<div class="c" style="left:119.00px;top:539.87px;">Sonntag</div>
<div class="c" style="right:503.10px;top:539.87px;">0,00</div>
<div class="c" style="right:343.50px;top:539.87px;">0,00</div>
<div class="c" style="right:263.70px;top:539.87px;">0,00</div>
<div class="c" style="right:183.80px;top:539.87px;">-1736,50</div>
<div class="c" style="right:904.10px;top:556.60px;">17.11.2008</div>
<div class="c" style="left:119.00px;top:556.60px;">Montag</div>
<div class="c" style="right:503.10px;top:556.60px;">-0,50</div>
<div class="c" style="right:343.50px;top:556.60px;">9,00</div>
<div class="c" style="right:263.70px;top:556.60px;">-9,50</div>
<div class="c" style="right:183.80px;top:556.60px;">-1746,00</div>
<div class="c" style="right:904.10px;top:573.33px;">18.11.2008</div>
<div class="c" style="left:119.00px;top:573.33px;">Dienstag</div>
<div class="c" style="right:503.10px;top:573.33px;">-0,50</div>
<div class="c" style="right:343.50px;top:573.33px;">8,00</div>
<div class="c" style="right:263.70px;top:573.33px;">-8,50</div>
<div class="c" style="right:183.80px;top:573.33px;">-1754,50</div>
<div class="c" style="right:904.10px;top:590.06px;">19.11.2008</div>
<div class="c" style="left:119.00px;top:590.06px;">Mittwoch</div>
<div class="c" style="right:503.10px;top:590.06px;">-0,50</div>
<div class="c" style="right:343.50px;top:590.06px;">8,00</div>
<div class="c" style="right:263.70px;top:590.06px;">-8,50</div>
<div class="c" style="right:183.80px;top:590.06px;">-1763,00</div>
<div class="c" style="right:904.10px;top:606.79px;">20.11.2008</div>
<div class="c" style="left:119.00px;top:606.79px;">Donnerstag</div>
<div class="c" style="right:503.10px;top:606.79px;">-0,50</div>
<div class="c" style="right:343.50px;top:606.79px;">8,00</div>
<div class="c" style="right:263.70px;top:606.79px;">-8,50</div>
<div class="c" style="right:183.80px;top:606.79px;">-1771,50</div>
<div class="c" style="right:904.10px;top:623.52px;">21.11.2008</div>
<div class="c" style="left:119.00px;top:623.52px;">Freitag</div>
<div class="c" style="right:503.10px;top:623.52px;">0,00</div>
<div class="c" style="right:343.50px;top:623.52px;">5,50</div>
<div class="c" style="right:263.70px;top:623.52px;">-5,50</div>
<div class="c" style="right:183.80px;top:623.52px;">-1777,00</div>
<div class="c" style="right:904.10px;top:640.25px;">22.11.2008</div>
<div class="c" style="left:119.00px;top:640.25px;">Samstag</div>
<div class="c" style="right:503.10px;top:640.25px;">0,00</div>
<div class="c" style="right:343.50px;top:640.25px;">0,00</div>
<div class="c" style="right:263.70px;top:640.25px;">0,00</div>
<div class="c" style="right:183.80px;top:640.25px;">-1777,00</div>
<div class="c" style="right:904.10px;top:656.98px;">23.11.2008</div>
<div class="c" style="left:119.00px;top:656.98px;">Sonntag</div>
<div class="c" style="right:503.10px;top:656.98px;">0,00</div>
<div class="c" style="right:343.50px;top:656.98px;">0,00</div>
<div class="c" style="right:263.70px;top:656.98px;">0,00</div>
<div class="c" style="right:183.80px;top:656.98px;">-1777,00</div>
<div class="c" style="right:904.10px;top:673.71px;">24.11.2008</div>
<div class="c" style="left:119.00px;top:673.71px;">Montag</div>
<div class="c" style="right:503.10px;top:673.71px;">-0,50</div>
<div class="c" style="right:343.50px;top:673.71px;">9,00</div>
<div class="c" style="right:263.70px;top:673.71px;">-9,50</div>
<div class="c" style="right:183.80px;top:673.71px;">-1786,50</div>
<div class="c" style="right:904.10px;top:690.44px;">25.11.2008</div>
<div class="c" style="left:119.00px;top:690.44px;">Dienstag</div>
<div class="c" style="right:503.10px;top:690.44px;">-0,50</div>
<div class="c" style="right:343.50px;top:690.44px;">8,00</div>
<div class="c" style="right:263.70px;top:690.44px;">-8,50</div>
<div class="c" style="right:183.80px;top:690.44px;">-1795,00</div>
<div class="c" style="right:904.10px;top:707.17px;">26.11.2008</div>
<div class="c" style="left:119.00px;top:707.17px;">Mittwoch</div>
<div class="c" style="right:503.10px;top:707.17px;">-0,50</div>
<div class="c" style="right:343.50px;top:707.17px;">8,00</div>
<div class="c" style="right:263.70px;top:707.17px;">-8,50</div>
<div class="c" style="right:183.80px;top:707.17px;">-1803,50</div>
<div class="c" style="right:904.10px;top:723.90px;">27.11.2008</div>
<div class="c" style="left:119.00px;top:723.90px;">Donnerstag</div>
<div class="c" style="right:503.10px;top:723.90px;">-0,50</div>
<div class="c" style="right:343.50px;top:723.90px;">8,00</div>
<div class="c" style="right:263.70px;top:723.90px;">-8,50</div>
<div class="c" style="right:183.80px;top:723.90px;">-1812,00</div>
<div class="c" style="right:904.10px;top:740.63px;">28.11.2008</div>
<div class="c" style="left:119.00px;top:740.63px;">Freitag</div>
<div class="c" style="right:503.10px;top:740.63px;">0,00</div>
<div class="c" style="right:343.50px;top:740.63px;">5,50</div>
<div class="c" style="right:263.70px;top:740.63px;">-5,50</div>
<div class="c" style="right:183.80px;top:740.63px;">-1817,50</div>
<div class="c" style="right:904.10px;top:757.36px;">29.11.2008</div>
<div class="c" style="left:119.00px;top:757.36px;">Samstag</div>
<div class="c" style="right:503.10px;top:757.36px;">0,00</div>
<div class="c" style="right:343.50px;top:757.36px;">0,00</div>
<div class="c" style="right:263.70px;top:757.36px;">0,00</div>
<div class="c" style="right:183.80px;top:757.36px;">-1817,50</div>
<div class="c" style="right:904.10px;top:774.09px;">30.11.2008</div>
<div class="c" style="left:119.00px;top:774.09px;">Sonntag</div>
<div class="c" style="right:503.10px;top:774.09px;">0,00</div>
<div class="c" style="right:343.50px;top:774.09px;">0,00</div>
<div class="c" style="right:263.70px;top:774.09px;">0,00</div>
<div class="c" style="right:183.80px;top:774.09px;">-1817,50</div>
<div style="left:996.50px;top:116.00px;width:19.50px;height:671.70px;background:#f1f0f4"></div>
<div style="left:1013.60px;top:136.00px;width:1.00px;height:651.00px;background:#b4b0bc"></div>
<div style="left:1014.60px;top:84.00px;width:1.40px;height:723.00px;background:#f4f8f4"></div>
<div style="left:997.00px;top:117.00px;width:16.70px;height:2.50px;background:#111"></div>
<div style="left:998.50px;top:120.00px;width:15.00px;height:16.00px;background:linear-gradient(90deg,#f4f4f8,#dddde6);border:1px solid #c4c3cc;border-radius:2px"></div>
<svg style="left:1002px;top:125px" width="8" height="5" viewBox="0 0 8 5"><path d="M1 4.2L4 1.2L7 4.2" fill="none" stroke="#3a3e50" stroke-width="1.8"/></svg>
<div style="left:998.20px;top:136.50px;width:15.30px;height:309.80px;background:linear-gradient(90deg,#f6f6fa,#e4e4ec 60%,#d6d6e0);border:1px solid #c0bfc9;border-radius:2px"></div>
<div style="left:1002.00px;top:287.50px;width:8.00px;height:1.00px;background:#b4b3bc"></div>
<div style="left:1002.00px;top:289.50px;width:8.00px;height:1.00px;background:#b4b3bc"></div>
<div style="left:1002.00px;top:291.50px;width:8.00px;height:1.00px;background:#b4b3bc"></div>
<div style="left:1002.00px;top:293.50px;width:8.00px;height:1.00px;background:#b4b3bc"></div>
<div style="left:998.80px;top:774.70px;width:14.70px;height:14.10px;background:linear-gradient(90deg,#f4f4f8,#dddde6);border:1px solid #c4c3cc;border-radius:2px"></div>
<svg style="left:1002px;top:779px" width="8" height="5" viewBox="0 0 8 5"><path d="M1 0.8L4 3.8L7 0.8" fill="none" stroke="#3a3e50" stroke-width="1.8"/></svg>
<div style="left:4.00px;top:787.70px;width:1012.00px;height:21.30px;background:#eceaf0"></div>
<div style="left:4.00px;top:807.00px;width:1012.00px;height:2.00px;background:#e6f0e8"></div>
<div style="left:4.00px;top:787.70px;width:594.00px;height:1.00px;background:#c8c7ce"></div>
<div style="left:6.00px;top:791.00px;width:15.40px;height:15.00px;background:linear-gradient(#f2f2f8,#d4d4e0);border:1px solid #5a6078;border-radius:3px"></div>
<svg style="left:9.7px;top:794.5px" width="8" height="8" viewBox="0 0 8 8"><rect x="0.5" y="0.5" width="1.6" height="7" fill="#111"/><path d="M7 0.5V7.5L2.5 4Z" fill="#111"/></svg>
<div style="left:24.00px;top:791.00px;width:13.60px;height:15.00px;background:linear-gradient(#f2f2f8,#d4d4e0);border:1px solid #5a6078;border-radius:3px"></div>
<svg style="left:27.8px;top:794.5px" width="8" height="8" viewBox="0 0 8 8"><path d="M5.5 0.5V7.5L1 4Z" fill="#111"/></svg>
<div style="left:40.60px;top:791.00px;width:12.90px;height:15.00px;background:#eeedf2;border:1px solid #dcdbe2;border-radius:3px"></div>
<svg style="left:44.05px;top:794.5px" width="8" height="8" viewBox="0 0 8 8"><path d="M1.5 0.5V7.5L6 4Z" fill="#a8a8b0"/></svg>
<div style="left:57.00px;top:791.00px;width:14.40px;height:15.00px;background:#eeedf2;border:1px solid #dcdbe2;border-radius:3px"></div>
<svg style="left:60.2px;top:794.5px" width="8" height="8" viewBox="0 0 8 8"><path d="M1 0.5V7.5L5.5 4Z" fill="#a8a8b0"/><rect x="6" y="0.5" width="1.6" height="7" fill="#a8a8b0"/></svg>
<svg style="left:0;top:0" width="1020" height="812"><path d="M73.5 806.5L79.0 790.5H117.5L112 806.5Z" fill="#e7e6ed"/><path d="M73.5 806.5L79.0 790.5M74.5 806.5H112L117.5 790.5" fill="none" stroke="#6e6e7a" stroke-width="1"/><path d="M112 806.5L117.5 790.5H152.5L147 806.5Z" fill="#e7e6ed"/><path d="M112 806.5L117.5 790.5M113 806.5H147L152.5 790.5" fill="none" stroke="#6e6e7a" stroke-width="1"/><path d="M147 806.5L152.5 790.5H181.5L176 806.5Z" fill="#e7e6ed"/><path d="M147 806.5L152.5 790.5M148 806.5H176L181.5 790.5" fill="none" stroke="#6e6e7a" stroke-width="1"/><path d="M176 806.5L181.5 790.5H213.0L207.5 806.5Z" fill="#e7e6ed"/><path d="M176 806.5L181.5 790.5M177 806.5H207.5L213.0 790.5" fill="none" stroke="#6e6e7a" stroke-width="1"/><path d="M207.5 806.5L213.0 790.5H241.2L235.7 806.5Z" fill="#e7e6ed"/><path d="M207.5 806.5L213.0 790.5M208.5 806.5H235.7L241.2 790.5" fill="none" stroke="#6e6e7a" stroke-width="1"/><path d="M235.7 806.5L241.2 790.5H289.0L283.5 806.5Z" fill="#e7e6ed"/><path d="M235.7 806.5L241.2 790.5M236.7 806.5H283.5L289.0 790.5" fill="none" stroke="#6e6e7a" stroke-width="1"/><path d="M283.5 806.5L289.0 790.5H360.5L355 806.5Z" fill="#e7e6ed"/><path d="M283.5 806.5L289.0 790.5M284.5 806.5H355L360.5 790.5" fill="none" stroke="#6e6e7a" stroke-width="1"/><path d="M355 806.5L360.5 790.5H409.0L403.5 806.5Z" fill="#e7e6ed"/><path d="M355 806.5L360.5 790.5M356 806.5H403.5L409.0 790.5" fill="none" stroke="#6e6e7a" stroke-width="1"/><path d="M475.5 806.5L481.0 790.5H544.0L538.5 806.5Z" fill="#e7e6ed"/><path d="M475.5 806.5L481.0 790.5M476.5 806.5H538.5L544.0 790.5" fill="none" stroke="#6e6e7a" stroke-width="1"/><path d="M403.5 789.5L409.0 806.5H475.0L480.5 789.5Z" fill="#fafafc"/><path d="M403.5 789.5L409.0 806.5H475.0L480.5 789.5" fill="none" stroke="#4a4a56" stroke-width="1"/></svg>
<div class="t" style="left:84.00px;top:795.10px;font-size:10.3px;color:#111">März</div>
<div class="t" style="left:121.00px;top:795.10px;font-size:10.3px;color:#111">April</div>
<div class="t" style="left:155.00px;top:795.10px;font-size:10.3px;color:#111">Mai</div>
<div class="t" style="left:182.50px;top:795.10px;font-size:10.3px;color:#111">Juni</div>
<div class="t" style="left:214.00px;top:795.10px;font-size:10.3px;color:#111">Juli</div>
<div class="t" style="left:243.00px;top:795.10px;font-size:10.3px;color:#111">August</div>
<div class="t" style="left:294.00px;top:795.10px;font-size:10.3px;color:#111">September</div>
<div class="t" style="left:362.80px;top:795.10px;font-size:10.3px;color:#111">Oktober</div>
<div class="t" style="left:412.70px;top:795.10px;font-size:11.4px;font-weight:bold;color:#000">November</div>
<div class="t" style="left:483.60px;top:795.10px;font-size:10.3px;color:#111">Dezember</div>
<div style="left:546.00px;top:790.20px;width:47.50px;height:1.00px;background:#a4a3ac"></div>
<div style="left:593.50px;top:790.00px;width:3.50px;height:16.40px;background:#f6f6fa;border:1px solid #b8b8c0"></div>
<div style="left:597.00px;top:790.00px;width:2.00px;height:16.40px;background:#6e6e78"></div>
<div style="left:598.50px;top:788.70px;width:397.50px;height:18.30px;background:#f1f0f4"></div>
<div style="left:600.00px;top:791.40px;width:15.30px;height:14.80px;background:linear-gradient(#f4f4f8,#dddde6);border:1px solid #c4c3cc;border-radius:2px"></div>
<svg style="left:605px;top:795.5px" width="6" height="8" viewBox="0 0 6 8"><path d="M4.5 1L1.5 4L4.5 7" fill="none" stroke="#3a3e50" stroke-width="1.8"/></svg>
<div style="left:616.50px;top:792.00px;width:164.50px;height:14.00px;background:linear-gradient(#f6f6fa,#e2e2ea 60%,#d4d4de);border:1px solid #c0bfc9;border-radius:2px"></div>
<div style="left:696.00px;top:796.00px;width:1.00px;height:6.00px;background:#b4b3bc"></div>
<div style="left:698.00px;top:796.00px;width:1.00px;height:6.00px;background:#b4b3bc"></div>
<div style="left:700.00px;top:796.00px;width:1.00px;height:6.00px;background:#b4b3bc"></div>
<div style="left:702.00px;top:796.00px;width:1.00px;height:6.00px;background:#b4b3bc"></div>
<div style="left:978.80px;top:791.00px;width:14.20px;height:15.50px;background:linear-gradient(#f4f4f8,#dddde6);border:1px solid #c4c3cc;border-radius:2px"></div>
<svg style="left:983px;top:795px" width="6" height="8" viewBox="0 0 6 8"><path d="M1.5 1L4.5 4L1.5 7" fill="none" stroke="#3a3e50" stroke-width="1.8"/></svg>
<div style="left:994.00px;top:791.00px;width:3.00px;height:15.00px;background:#111"></div>
<div style="left:996.50px;top:788.80px;width:19.50px;height:18.20px;background:#e6e5ec"></div>
</body></html>
